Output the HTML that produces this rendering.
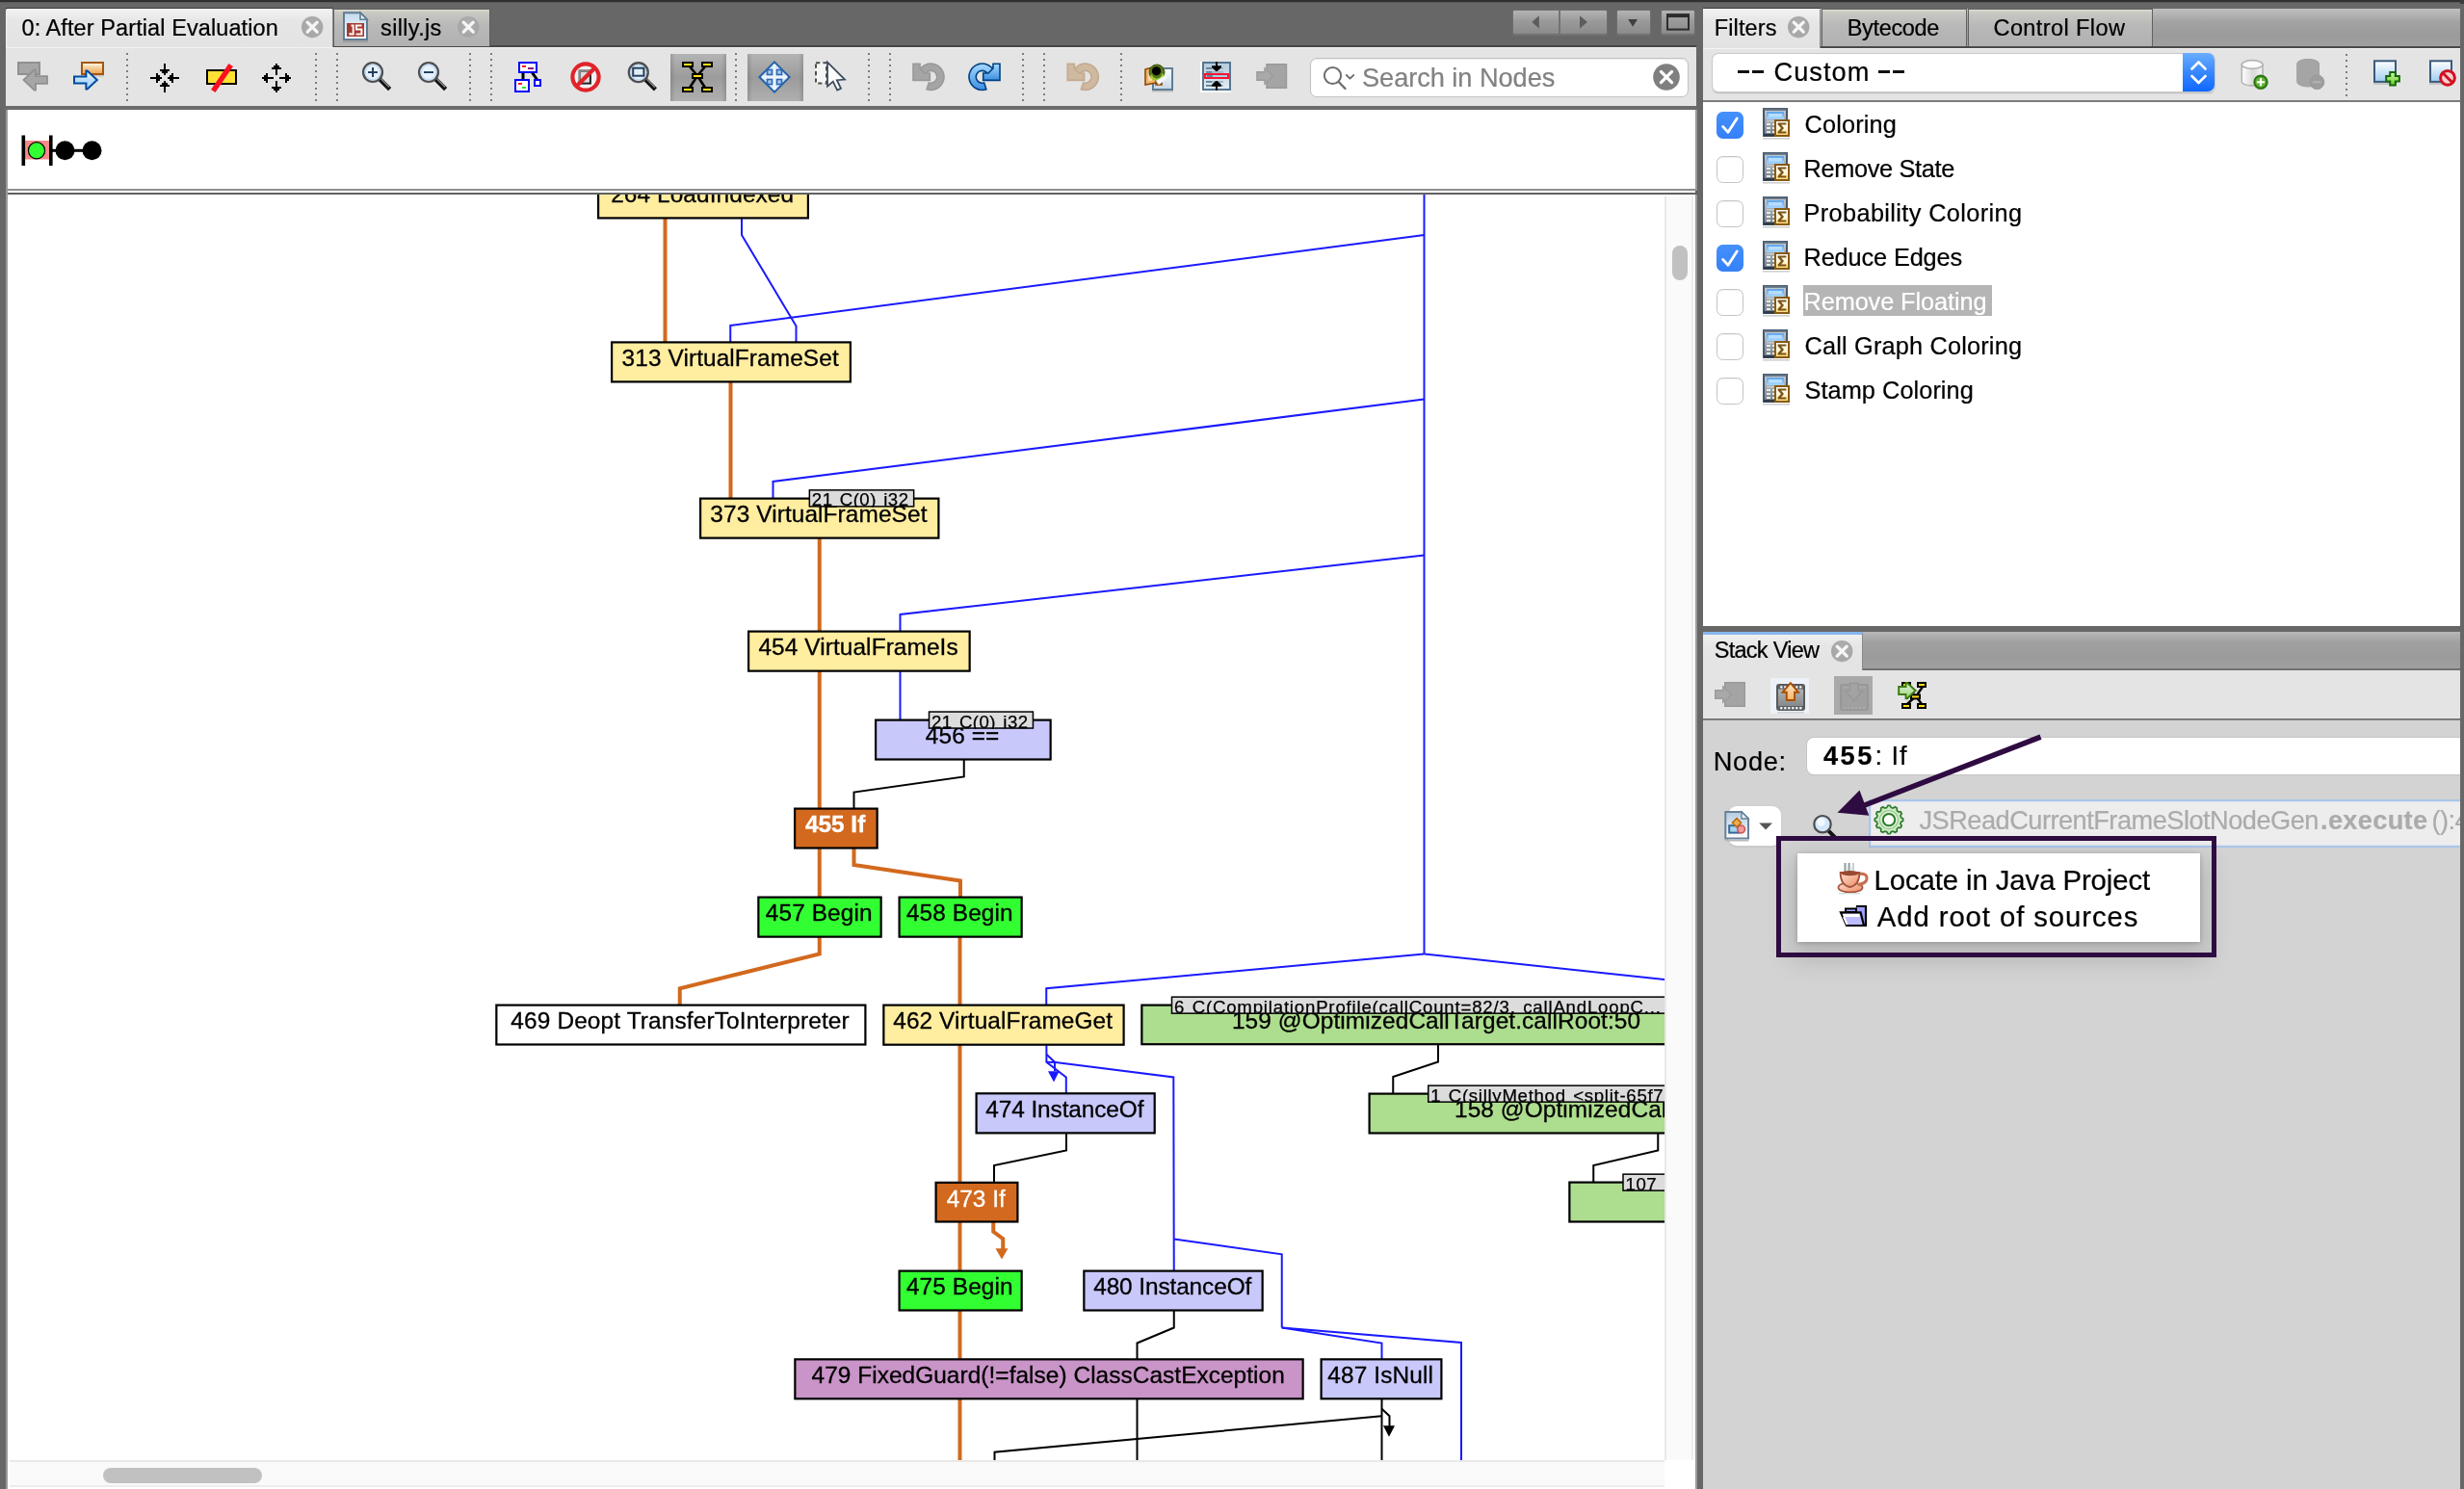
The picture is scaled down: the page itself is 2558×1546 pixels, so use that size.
<!DOCTYPE html><html><head><meta charset="utf-8"><title>IGV</title><style>
html,body{margin:0;padding:0}
body{width:2558px;height:1546px;position:relative;overflow:hidden;background:#676767;font-family:"Liberation Sans",sans-serif;}
div{box-sizing:border-box}
.abs{position:absolute}
#root{position:absolute;left:0;top:0;width:2558px;height:1546px;will-change:transform}
</style></head><body><div id="root">
<div class="" style="position:absolute;left:0px;top:0px;width:2558px;height:2px;background:#303030"></div>
<div class="" style="position:absolute;left:0px;top:2px;width:2558px;height:1px;background:#5a5a5a"></div>
<div class="" style="position:absolute;left:6px;top:47px;width:1755px;height:2px;background:#474747"></div>
<div class="" style="position:absolute;left:6px;top:8px;width:340px;height:1.2px;background:#3a3a3a"></div>
<div class="" style="position:absolute;left:1768px;top:8px;width:121.5px;height:1.2px;background:#3a3a3a"></div>
<div class="" style="position:absolute;left:6px;top:9px;width:340px;height:40px;background:linear-gradient(#f2f2f2,#e6e6e6 30%,#e3e3e3);border-top:1px solid #fafafa;border-left:1px solid #f4f4f4;border-right:1px solid #8a8a8a;border-radius:2px 2px 0 0"></div>
<div style="position:absolute;left:22.5px;top:17.61px;font-size:23.5px;line-height:23.5px;color:#000;letter-spacing:0.092px;font-weight:400;white-space:pre;-webkit-text-stroke:0.22px #000;">0: After Partial Evaluation</div>
<svg style="position:absolute;left:310.6px;top:14.8px" width="26.4" height="26.4" viewBox="-13.2 -13.2 26.4 26.4"><defs><radialGradient id="cb323" cx="50%" cy="40%" r="60%"><stop offset="0" stop-color="#b2b2b2"/><stop offset="0.8" stop-color="#a6a6a6"/><stop offset="1" stop-color="#aeaeae"/></radialGradient></defs><circle r="11.2" fill="url(#cb323)" /><path d="M-5,-5L5,5M5,-5L-5,5" stroke="#f6f6f6" stroke-width="3.3" stroke-linecap="round"/></svg>
<div class="" style="position:absolute;left:346.3px;top:8.6px;width:162.4px;height:39.2px;background:linear-gradient(#d4d4c8,#c6c6c2 12%,#b8b8b8 45%,#b1b1b1);border:1.2px solid #5e5e5e;border-bottom:none;box-shadow:inset 0 1px 0 #dcdcd0"></div>
<div style="position:absolute;left:395.1px;top:17.61px;font-size:23.5px;line-height:23.5px;color:#000;letter-spacing:0.333px;font-weight:400;white-space:pre;-webkit-text-stroke:0.22px #000;">silly.js</div>
<svg style="position:absolute;left:472.6px;top:14.8px" width="26.4" height="26.4" viewBox="-13.2 -13.2 26.4 26.4"><defs><radialGradient id="cb485" cx="50%" cy="40%" r="60%"><stop offset="0" stop-color="#b2b2b2"/><stop offset="0.8" stop-color="#a6a6a6"/><stop offset="1" stop-color="#aeaeae"/></radialGradient></defs><circle r="11.2" fill="url(#cb485)" /><path d="M-5,-5L5,5M5,-5L-5,5" stroke="#f6f6f6" stroke-width="3.3" stroke-linecap="round"/></svg>
<div class="" style="position:absolute;left:1569.5px;top:9.5px;width:99.3px;height:26.8px;background:linear-gradient(#b4b4b4,#9a9a9a 45%,#8b8b8b);border:1px solid #6e6e6e;border-radius:2px;box-shadow:0 1px 0 #757575"></div>
<div class="" style="position:absolute;left:1618.2px;top:10.5px;width:1.5px;height:25px;background:#737373"></div>
<div class="" style="position:absolute;left:1677.7px;top:9.5px;width:36.6px;height:26.8px;background:linear-gradient(#b4b4b4,#9a9a9a 45%,#8b8b8b);border:1px solid #6e6e6e;border-radius:2px;box-shadow:0 1px 0 #757575"></div>
<div class="" style="position:absolute;left:1724px;top:9.5px;width:36.2px;height:26.8px;background:linear-gradient(#b4b4b4,#9a9a9a 45%,#8b8b8b);border:1px solid #6e6e6e;border-radius:2px;box-shadow:0 1px 0 #757575"></div>
<svg class="abs" style="left:1560px;top:8px" width="210" height="32" viewBox="1560 8 210 32"><polygon points="1590.4,22.9 1597.8,16.2 1597.8,29.6" fill="#5c5c5c"/><polygon points="1647.9,22.9 1640,16.2 1640,29.6" fill="#5c5c5c"/><polygon points="1690.2,20 1700,20 1695.1,27.8" fill="#3f3f3f"/><rect x="1731" y="16" width="22" height="14.6" fill="none" stroke="#2c2c2c" stroke-width="2"/><rect x="1730" y="14.1" width="24" height="4" fill="#2c2c2c"/></svg>
<div class="" style="position:absolute;left:6px;top:49px;width:1755px;height:61px;background:#e4e4e4;border-top:1px solid #f3f3f3"></div>
<div class="" style="position:absolute;left:6px;top:110px;width:1756px;height:4px;background:#6b6b6b"></div>
<div class="" style="position:absolute;left:8px;top:114px;width:1752px;height:82px;background:#fff"></div>
<div class="" style="position:absolute;left:6px;top:114px;width:2px;height:1432px;background:#9a9a9a"></div>
<div class="" style="position:absolute;left:8px;top:196px;width:1752px;height:2px;background:#8e8e8e"></div>
<div class="" style="position:absolute;left:8px;top:198px;width:1754px;height:2px;background:#fff"></div>
<div class="" style="position:absolute;left:8px;top:200px;width:1754px;height:2px;background:#606060"></div>
<div class="" style="position:absolute;left:8px;top:202px;width:1752px;height:1344px;background:#fff"></div>
<div class="" style="position:absolute;left:1760px;top:114px;width:2px;height:1432px;background:#9a9a9a"></div>
<div class="" style="position:absolute;left:1760px;top:198px;width:2px;height:4px;background:#606060"></div>
<div class="" style="position:absolute;left:1728px;top:204px;width:30px;height:1312px;background:#fafafa;border-left:2px solid #e8e8e8;border-right:2px solid #ededed"></div>
<div class="" style="position:absolute;left:1736px;top:255px;width:16px;height:36px;background:#c1c1c1;border-radius:8px"></div>
<div class="" style="position:absolute;left:10px;top:1516px;width:1718px;height:28px;background:#fafafa;border-top:2px solid #e8e8e8;border-bottom:2px solid #ededed"></div>
<div class="" style="position:absolute;left:107px;top:1524px;width:165px;height:16px;background:#c1c1c1;border-radius:8px"></div>
<div class="" style="position:absolute;left:696.3px;top:56.3px;width:57.5px;height:49.2px;background:linear-gradient(90deg,rgba(0,0,0,0.13),rgba(0,0,0,0) 9%,rgba(0,0,0,0) 91%,rgba(0,0,0,0.13)),linear-gradient(#b4b4b4,#9c9c9c 50%,#afafaf);"></div>
<div class="" style="position:absolute;left:776.3px;top:56.3px;width:57.5px;height:49.2px;background:linear-gradient(90deg,rgba(0,0,0,0.13),rgba(0,0,0,0) 9%,rgba(0,0,0,0) 91%,rgba(0,0,0,0.13)),linear-gradient(#b4b4b4,#9c9c9c 50%,#afafaf);"></div>
<div style="position:absolute;left:131px;top:55px;width:2px;height:50px;background:repeating-linear-gradient(to bottom,#7d7d7d 0 2px,transparent 2px 6px)"></div>
<div style="position:absolute;left:327px;top:55px;width:2px;height:50px;background:repeating-linear-gradient(to bottom,#7d7d7d 0 2px,transparent 2px 6px)"></div>
<div style="position:absolute;left:349px;top:55px;width:2px;height:50px;background:repeating-linear-gradient(to bottom,#7d7d7d 0 2px,transparent 2px 6px)"></div>
<div style="position:absolute;left:487px;top:55px;width:2px;height:50px;background:repeating-linear-gradient(to bottom,#7d7d7d 0 2px,transparent 2px 6px)"></div>
<div style="position:absolute;left:509px;top:55px;width:2px;height:50px;background:repeating-linear-gradient(to bottom,#7d7d7d 0 2px,transparent 2px 6px)"></div>
<div style="position:absolute;left:763.3px;top:55px;width:2px;height:50px;background:repeating-linear-gradient(to bottom,#7d7d7d 0 2px,transparent 2px 6px)"></div>
<div style="position:absolute;left:901px;top:55px;width:2px;height:50px;background:repeating-linear-gradient(to bottom,#7d7d7d 0 2px,transparent 2px 6px)"></div>
<div style="position:absolute;left:923px;top:55px;width:2px;height:50px;background:repeating-linear-gradient(to bottom,#7d7d7d 0 2px,transparent 2px 6px)"></div>
<div style="position:absolute;left:1061px;top:55px;width:2px;height:50px;background:repeating-linear-gradient(to bottom,#7d7d7d 0 2px,transparent 2px 6px)"></div>
<div style="position:absolute;left:1083px;top:55px;width:2px;height:50px;background:repeating-linear-gradient(to bottom,#7d7d7d 0 2px,transparent 2px 6px)"></div>
<div style="position:absolute;left:1163px;top:55px;width:2px;height:50px;background:repeating-linear-gradient(to bottom,#7d7d7d 0 2px,transparent 2px 6px)"></div>
<div class="" style="position:absolute;left:1359.5px;top:59.5px;width:393px;height:41px;background:#fff;border:1.3px solid #c2c2c2;border-radius:7px;box-shadow:inset 0 1px 1px rgba(0,0,0,0.08)"></div>
<svg class="abs" style="left:1370px;top:64px" width="40" height="34" viewBox="1370 64 40 34"><circle cx="1383.5" cy="78.5" r="8.6" fill="none" stroke="#6e6e6e" stroke-width="2"/><path d="M1389.7,85L1396.5,92" stroke="#6e6e6e" stroke-width="2.4" stroke-linecap="round"/><path d="M1397.8,78L1401.5,81.6L1405.3,78" fill="none" stroke="#6e6e6e" stroke-width="1.8" stroke-linecap="round"/></svg>
<div style="position:absolute;left:1414px;top:66.98px;font-size:27.2px;line-height:27.2px;color:#828282;letter-spacing:-0.047px;font-weight:400;white-space:pre;-webkit-text-stroke:0.22px #828282;">Search in Nodes</div>
<svg class="abs" style="left:1714px;top:64px" width="32" height="32" viewBox="-16 -16 32 32"><circle r="13.8" fill="#7f7f7f"/><path d="M-5.6,-5.6L5.6,5.6M5.6,-5.6L-5.6,5.6" stroke="#fff" stroke-width="3.2" stroke-linecap="round"/></svg>
<svg class="abs" style="left:16px;top:134px" width="100" height="44" viewBox="16 134 100 44"><rect x="25" y="146" width="27" height="19.5" fill="#f98a8a"/><rect x="22.5" y="140.5" width="3.6" height="31.5" fill="#000"/><rect x="51" y="140.5" width="3.6" height="31.5" fill="#000"/><rect x="54" y="154.8" width="42" height="3" fill="#000"/><circle cx="38" cy="156.3" r="8.6" fill="#32ff32" stroke="#000" stroke-width="1.2"/><circle cx="67.5" cy="156.3" r="10" fill="#000"/><circle cx="95.5" cy="156.3" r="10" fill="#000"/></svg>
<svg id="graph" width="1720" height="1314" viewBox="8 202 1720 1314" style="position:absolute;left:8px;top:202px;background:#fff;overflow:hidden" font-family="Liberation Sans, sans-serif">
<polyline points="690.50,227.00 690.50,355.00" fill="none" stroke="#d2691e" stroke-width="4" stroke-linejoin="miter"/>
<polyline points="758.50,397.00 758.50,517.00" fill="none" stroke="#d2691e" stroke-width="4" stroke-linejoin="miter"/>
<polyline points="850.75,559.00 850.75,655.00" fill="none" stroke="#d2691e" stroke-width="4" stroke-linejoin="miter"/>
<polyline points="850.75,697.00 850.75,839.00" fill="none" stroke="#d2691e" stroke-width="4" stroke-linejoin="miter"/>
<polyline points="850.75,881.00 850.75,931.00" fill="none" stroke="#d2691e" stroke-width="4" stroke-linejoin="miter"/>
<polyline points="886.50,881.00 886.50,898.00 997.00,914.50 997.00,931.00" fill="none" stroke="#d2691e" stroke-width="4" stroke-linejoin="miter"/>
<polyline points="850.75,973.00 850.75,990.50 705.75,1026.25 705.75,1043.00" fill="none" stroke="#d2691e" stroke-width="4" stroke-linejoin="miter"/>
<polyline points="996.50,973.00 996.50,1043.00" fill="none" stroke="#d2691e" stroke-width="4" stroke-linejoin="miter"/>
<polyline points="996.50,1085.00 996.50,1227.00" fill="none" stroke="#d2691e" stroke-width="4" stroke-linejoin="miter"/>
<polyline points="996.50,1269.00 996.50,1319.00" fill="none" stroke="#d2691e" stroke-width="4" stroke-linejoin="miter"/>
<polyline points="996.50,1361.00 996.50,1411.00" fill="none" stroke="#d2691e" stroke-width="4" stroke-linejoin="miter"/>
<polyline points="996.50,1453.00 996.50,1520.00" fill="none" stroke="#d2691e" stroke-width="4" stroke-linejoin="miter"/>
<polyline points="1031.25,1269.00 1031.25,1278.75 1041.25,1286.25 1041.25,1297.00" fill="none" stroke="#d2691e" stroke-width="4" stroke-linejoin="miter"/>
<polygon points="1033.50,1296.25 1046.50,1296.25 1040.00,1307.50" fill="#d2691e"/>
<polyline points="1478.50,200.00 1478.50,990.50" fill="none" stroke="#1a1aff" stroke-width="2" stroke-linejoin="miter"/>
<polyline points="770.00,227.00 770.00,244.00 826.50,338.50 826.50,355.00" fill="none" stroke="#1a1aff" stroke-width="2" stroke-linejoin="miter"/>
<polyline points="1478.50,244.00 758.25,338.00 758.25,355.00" fill="none" stroke="#1a1aff" stroke-width="2" stroke-linejoin="miter"/>
<polyline points="1478.50,414.50 802.50,500.00 802.50,517.00" fill="none" stroke="#1a1aff" stroke-width="2" stroke-linejoin="miter"/>
<polyline points="1478.50,576.50 934.50,638.00 934.50,655.00" fill="none" stroke="#1a1aff" stroke-width="2" stroke-linejoin="miter"/>
<polyline points="934.50,697.00 934.50,747.00" fill="none" stroke="#1a1aff" stroke-width="2" stroke-linejoin="miter"/>
<polyline points="1478.50,990.50 1086.25,1026.25 1086.25,1043.00" fill="none" stroke="#1a1aff" stroke-width="2" stroke-linejoin="miter"/>
<polyline points="1478.50,990.50 1740.00,1018.30" fill="none" stroke="#1a1aff" stroke-width="2" stroke-linejoin="miter"/>
<polyline points="1086.40,1085.00 1086.40,1102.80 1106.80,1118.50 1106.80,1135.00" fill="none" stroke="#1a1aff" stroke-width="2" stroke-linejoin="miter"/>
<polyline points="1086.40,1102.80 1095.80,1103.00 1218.30,1118.50 1218.75,1319.00" fill="none" stroke="#1a1aff" stroke-width="2" stroke-linejoin="miter"/>
<polyline points="1086.40,1094.70 1095.00,1102.80 1095.00,1112.00" fill="none" stroke="#1a1aff" stroke-width="2" stroke-linejoin="miter"/>
<polygon points="1088.00,1112.30 1099.60,1112.30 1094.00,1123.40" fill="#1a1aff"/>
<polyline points="1218.75,1286.50 1330.75,1302.25 1330.75,1378.50" fill="none" stroke="#1a1aff" stroke-width="2" stroke-linejoin="miter"/>
<polyline points="1330.75,1378.50 1434.50,1394.50 1434.50,1411.00" fill="none" stroke="#1a1aff" stroke-width="2" stroke-linejoin="miter"/>
<polyline points="1330.75,1378.50 1517.00,1394.00 1517.00,1520.00" fill="none" stroke="#1a1aff" stroke-width="2" stroke-linejoin="miter"/>
<polyline points="1000.75,789.00 1000.75,806.50 886.50,822.50 886.50,839.00" fill="none" stroke="#000" stroke-width="2" stroke-linejoin="miter"/>
<polyline points="1107.00,1177.00 1107.00,1194.50 1032.00,1210.00 1032.00,1227.00" fill="none" stroke="#000" stroke-width="2" stroke-linejoin="miter"/>
<polyline points="1493.00,1084.00 1493.00,1102.50 1446.25,1118.00 1446.25,1135.00" fill="none" stroke="#000" stroke-width="2" stroke-linejoin="miter"/>
<polyline points="1721.25,1177.00 1721.25,1194.50 1654.25,1210.00 1654.25,1227.00" fill="none" stroke="#000" stroke-width="2" stroke-linejoin="miter"/>
<polyline points="1218.75,1361.00 1218.75,1378.50 1180.50,1394.50 1180.50,1411.00" fill="none" stroke="#000" stroke-width="2" stroke-linejoin="miter"/>
<polyline points="1180.50,1453.00 1180.50,1520.00" fill="none" stroke="#000" stroke-width="2" stroke-linejoin="miter"/>
<polyline points="1434.50,1453.00 1434.50,1520.00" fill="none" stroke="#000" stroke-width="2" stroke-linejoin="miter"/>
<polyline points="1434.50,1462.75 1442.50,1470.25 1442.50,1481.00" fill="none" stroke="#000" stroke-width="2" stroke-linejoin="miter"/>
<polygon points="1436.00,1480.25 1448.00,1480.25 1442.00,1491.80" fill="#000"/>
<polyline points="1434.50,1470.25 1032.50,1507.75 1032.50,1520.00" fill="none" stroke="#000" stroke-width="2" stroke-linejoin="miter"/>
<rect x="621.10" y="185.60" width="217.80" height="40.80" fill="#ffeda0" stroke="#000" stroke-width="2.2"/><text x="729.20" y="210.30" font-size="24.4" fill="#000" stroke="#000" stroke-width="0.3" font-weight="400" text-anchor="middle" letter-spacing="0.1">264 LoadIndexed</text>
<rect x="635.10" y="355.40" width="247.80" height="41.00" fill="#ffeda0" stroke="#000" stroke-width="2.2"/><text x="758.20" y="380.10" font-size="24.4" fill="#000" stroke="#000" stroke-width="0.3" font-weight="400" text-anchor="middle" letter-spacing="0.1">313 VirtualFrameSet</text>
<rect x="727.10" y="517.60" width="247.30" height="41.00" fill="#ffeda0" stroke="#000" stroke-width="2.2"/><text x="849.95" y="542.30" font-size="24.4" fill="#000" stroke="#000" stroke-width="0.3" font-weight="400" text-anchor="middle" letter-spacing="0.1">373 VirtualFrameSet</text>
<rect x="777.10" y="655.60" width="229.55" height="41.05" fill="#ffeda0" stroke="#000" stroke-width="2.2"/><text x="891.08" y="680.30" font-size="24.4" fill="#000" stroke="#000" stroke-width="0.3" font-weight="400" text-anchor="middle" letter-spacing="0.1">454 VirtualFrameIs</text>
<rect x="909.10" y="747.60" width="181.55" height="40.90" fill="#c8c8fa" stroke="#000" stroke-width="2.2"/><text x="999.08" y="772.30" font-size="24.4" fill="#000" stroke="#000" stroke-width="0.3" font-weight="400" text-anchor="middle" letter-spacing="0.1">456 ==</text>
<rect x="825.10" y="839.60" width="85.55" height="40.90" fill="#d2691e" stroke="#000" stroke-width="2.2"/><text x="867.08" y="864.30" font-size="24.4" fill="#fff" stroke="#fff" stroke-width="0.3" font-weight="700" text-anchor="middle" letter-spacing="0">455 If</text>
<rect x="787.35" y="931.60" width="127.30" height="41.05" fill="#32ff32" stroke="#000" stroke-width="2.2"/><text x="850.20" y="956.30" font-size="24.4" fill="#000" stroke="#000" stroke-width="0.3" font-weight="400" text-anchor="middle" letter-spacing="0.1">457 Begin</text>
<rect x="933.60" y="931.60" width="127.05" height="41.05" fill="#32ff32" stroke="#000" stroke-width="2.2"/><text x="996.33" y="956.30" font-size="24.4" fill="#000" stroke="#000" stroke-width="0.3" font-weight="400" text-anchor="middle" letter-spacing="0.1">458 Begin</text>
<rect x="515.35" y="1043.60" width="383.05" height="40.90" fill="#ffffff" stroke="#000" stroke-width="2.2"/><text x="706.08" y="1068.30" font-size="24.4" fill="#000" stroke="#000" stroke-width="0.3" font-weight="400" text-anchor="middle" letter-spacing="0.14">469 Deopt TransferToInterpreter</text>
<rect x="917.35" y="1043.60" width="249.25" height="41.10" fill="#ffeda0" stroke="#000" stroke-width="2.2"/><text x="1041.17" y="1068.30" font-size="24.4" fill="#000" stroke="#000" stroke-width="0.3" font-weight="400" text-anchor="middle" letter-spacing="0.1">462 VirtualFrameGet</text>
<rect x="1185.35" y="1043.60" width="613.05" height="40.60" fill="#addd8e" stroke="#000" stroke-width="2.2"/><text x="1491.08" y="1068.30" font-size="24.4" fill="#000" stroke="#000" stroke-width="0.3" font-weight="400" text-anchor="middle" letter-spacing="0.1">159 @OptimizedCallTarget.callRoot:50</text>
<rect x="1013.60" y="1135.30" width="185.10" height="41.10" fill="#c8c8fa" stroke="#000" stroke-width="2.2"/><text x="1105.35" y="1160.00" font-size="24.4" fill="#000" stroke="#000" stroke-width="0.3" font-weight="400" text-anchor="middle" letter-spacing="-0.1">474 InstanceOf</text>
<rect x="1421.60" y="1135.60" width="477.30" height="40.90" fill="#addd8e" stroke="#000" stroke-width="2.2"/><text x="1510.00" y="1160.30" font-size="24.4" fill="#000" stroke="#000" stroke-width="0.3" font-weight="400" text-anchor="start" letter-spacing="0.1">158 @OptimizedCallTarget.callInlined:60</text>
<rect x="971.60" y="1227.85" width="84.80" height="40.65" fill="#d2691e" stroke="#000" stroke-width="2.2"/><text x="1013.20" y="1252.55" font-size="24.4" fill="#fff" stroke="#fff" stroke-width="0.3" font-weight="400" text-anchor="middle" letter-spacing="0">473 If</text>
<rect x="1629.35" y="1227.60" width="269.55" height="40.90" fill="#addd8e" stroke="#000" stroke-width="2.2"/>
<rect x="933.60" y="1319.60" width="127.05" height="40.90" fill="#32ff32" stroke="#000" stroke-width="2.2"/><text x="996.33" y="1344.30" font-size="24.4" fill="#000" stroke="#000" stroke-width="0.3" font-weight="400" text-anchor="middle" letter-spacing="0.1">475 Begin</text>
<rect x="1125.35" y="1319.60" width="185.30" height="40.90" fill="#c8c8fa" stroke="#000" stroke-width="2.2"/><text x="1217.20" y="1344.30" font-size="24.4" fill="#000" stroke="#000" stroke-width="0.3" font-weight="400" text-anchor="middle" letter-spacing="-0.1">480 InstanceOf</text>
<rect x="825.35" y="1411.35" width="527.30" height="40.95" fill="#c994c7" stroke="#000" stroke-width="2.2"/><text x="1088.20" y="1436.05" font-size="24.4" fill="#000" stroke="#000" stroke-width="0.3" font-weight="400" text-anchor="middle" letter-spacing="0.06">479 FixedGuard(!=false) ClassCastException</text>
<rect x="1371.60" y="1411.35" width="124.80" height="40.95" fill="#c8c8fa" stroke="#000" stroke-width="2.2"/><text x="1433.20" y="1436.05" font-size="24.4" fill="#000" stroke="#000" stroke-width="0.3" font-weight="400" text-anchor="middle" letter-spacing="0.15">487 IsNull</text>
<clipPath id="c839_508"><rect x="839.60" y="508.10" width="109.80" height="18.5"/></clipPath><rect x="840.35" y="508.85" width="108.30" height="17" fill="#dcdcdc" stroke="#000" stroke-width="1.5"/><text clip-path="url(#c839_508)" x="842.80" y="525.40" font-size="18.6" fill="#000" stroke="#000" stroke-width="0.25" letter-spacing="0.5" word-spacing="1.6">21 C(0) i32</text>
<clipPath id="c963_738"><rect x="963.75" y="738.30" width="109.45" height="18.5"/></clipPath><rect x="964.50" y="739.05" width="107.95" height="17" fill="#dcdcdc" stroke="#000" stroke-width="1.5"/><text clip-path="url(#c963_738)" x="966.95" y="755.60" font-size="18.6" fill="#000" stroke="#000" stroke-width="0.25" letter-spacing="0.5" word-spacing="1.6">21 C(0) i32</text>
<clipPath id="c1215_1034"><rect x="1215.75" y="1034.40" width="584.25" height="18.5"/></clipPath><rect x="1216.50" y="1035.15" width="582.75" height="17" fill="#dcdcdc" stroke="#000" stroke-width="1.5"/><text clip-path="url(#c1215_1034)" x="1218.95" y="1051.70" font-size="18.6" fill="#000" stroke="#000" stroke-width="0.25" letter-spacing="0.82" word-spacing="1.6">6 C(CompilationProfile(callCount=82/3, callAndLoopC...</text>
<clipPath id="c1482_1126"><rect x="1482.00" y="1126.40" width="318.00" height="18.5"/></clipPath><rect x="1482.75" y="1127.15" width="316.50" height="17" fill="#dcdcdc" stroke="#000" stroke-width="1.5"/><text clip-path="url(#c1482_1126)" x="1485.20" y="1143.70" font-size="18.6" fill="#000" stroke="#000" stroke-width="0.25" letter-spacing="0.72" word-spacing="1.6">1 C(sillyMethod &lt;split-65f7c3&gt;)</text>
<clipPath id="c1684_1218"><rect x="1684.25" y="1218.40" width="115.75" height="18.5"/></clipPath><rect x="1685.00" y="1219.15" width="114.25" height="17" fill="#dcdcdc" stroke="#000" stroke-width="1.5"/><text clip-path="url(#c1684_1218)" x="1687.45" y="1235.70" font-size="18.6" fill="#000" stroke="#000" stroke-width="0.25" letter-spacing="0.6" word-spacing="1.6">107 C</text>
</svg>
<svg class="abs" style="left:6px;top:49px" width="1755" height="61" viewBox="6 49 1755 61"><defs><linearGradient id="gOr" x1="0" y1="0" x2="0" y2="1"><stop offset="0" stop-color="#fffaf0"/><stop offset="0.45" stop-color="#f5cf9a"/><stop offset="1" stop-color="#e9a254"/></linearGradient><linearGradient id="gBl" x1="0" y1="0" x2="0" y2="1"><stop offset="0" stop-color="#ffffff"/><stop offset="0.5" stop-color="#b9defb"/><stop offset="1" stop-color="#a5d3f7"/></linearGradient><linearGradient id="gRedo" x1="0" y1="0" x2="0" y2="1"><stop offset="0" stop-color="#a6d8ff"/><stop offset="1" stop-color="#3b8ee0"/></linearGradient><linearGradient id="gWin" x1="0" y1="0" x2="0" y2="1"><stop offset="0" stop-color="#ffffff"/><stop offset="1" stop-color="#c3d6e8"/></linearGradient><linearGradient id="gCmp" x1="0" y1="0" x2="0" y2="1"><stop offset="0" stop-color="#b4cbdc"/><stop offset="1" stop-color="#e4edf4"/></linearGradient></defs>
<rect x="19.00" y="65.00" width="22.00" height="12.00" fill="#a6a6a6" stroke="#909090" stroke-width="2"/>
<polygon points="24.50,83.00 35.60,72.30 37.00,72.30 37.00,79.20 49.00,79.20 49.00,86.80 37.00,86.80 37.00,93.70 35.60,93.70" fill="#a6a6a6" stroke="#909090" stroke-width="1.8" stroke-linejoin="miter" />
<rect x="85.00" y="65.00" width="22.00" height="12.00" fill="url(#gOr)" stroke="#a5560c" stroke-width="2"/>
<rect x="84.00" y="78.00" width="24.00" height="1.60" fill="#c9c9c9" />
<polygon points="77.00,79.40 89.40,79.40 89.40,73.40 90.60,73.40 100.80,83.00 90.60,92.60 89.40,92.60 89.40,86.60 77.00,86.60" fill="url(#gBl)" stroke="#004a9f" stroke-width="2" stroke-linejoin="miter" />
<rect x="170.00" y="66.00" width="2.00" height="6.00" fill="#000" shape-rendering="crispEdges"/><rect x="166.00" y="72.00" width="10.00" height="2.00" fill="#000" shape-rendering="crispEdges"/><rect x="168.00" y="74.00" width="6.00" height="2.00" fill="#000" shape-rendering="crispEdges"/><rect x="170.00" y="76.00" width="2.00" height="2.00" fill="#000" shape-rendering="crispEdges"/><rect x="180.00" y="80.00" width="6.00" height="2.00" fill="#000" shape-rendering="crispEdges"/><rect x="178.00" y="76.00" width="2.00" height="10.00" fill="#000" shape-rendering="crispEdges"/><rect x="176.00" y="78.00" width="2.00" height="6.00" fill="#000" shape-rendering="crispEdges"/><rect x="174.00" y="80.00" width="2.00" height="2.00" fill="#000" shape-rendering="crispEdges"/><rect x="170.00" y="90.00" width="2.00" height="6.00" fill="#000" shape-rendering="crispEdges"/><rect x="166.00" y="88.00" width="10.00" height="2.00" fill="#000" shape-rendering="crispEdges"/><rect x="168.00" y="86.00" width="6.00" height="2.00" fill="#000" shape-rendering="crispEdges"/><rect x="170.00" y="84.00" width="2.00" height="2.00" fill="#000" shape-rendering="crispEdges"/><rect x="156.00" y="80.00" width="6.00" height="2.00" fill="#000" shape-rendering="crispEdges"/><rect x="162.00" y="76.00" width="2.00" height="10.00" fill="#000" shape-rendering="crispEdges"/><rect x="164.00" y="78.00" width="2.00" height="6.00" fill="#000" shape-rendering="crispEdges"/><rect x="166.00" y="80.00" width="2.00" height="2.00" fill="#000" shape-rendering="crispEdges"/>
<rect x="215.00" y="73.00" width="30.00" height="14.00" fill="#ffe135" stroke="#000" stroke-width="2"/>
<line x1="221.30" y1="94.60" x2="239.70" y2="67.40" stroke="#fb1022" stroke-width="5.4" stroke-linecap="butt"/>
<rect x="286.00" y="66.00" width="2.00" height="2.00" fill="#000" shape-rendering="crispEdges"/><rect x="284.00" y="68.00" width="6.00" height="2.00" fill="#000" shape-rendering="crispEdges"/><rect x="282.00" y="70.00" width="10.00" height="2.00" fill="#000" shape-rendering="crispEdges"/><rect x="286.00" y="72.00" width="2.00" height="6.00" fill="#000" shape-rendering="crispEdges"/><rect x="300.00" y="80.00" width="2.00" height="2.00" fill="#000" shape-rendering="crispEdges"/><rect x="298.00" y="78.00" width="2.00" height="6.00" fill="#000" shape-rendering="crispEdges"/><rect x="296.00" y="76.00" width="2.00" height="10.00" fill="#000" shape-rendering="crispEdges"/><rect x="290.00" y="80.00" width="6.00" height="2.00" fill="#000" shape-rendering="crispEdges"/><rect x="286.00" y="94.00" width="2.00" height="2.00" fill="#000" shape-rendering="crispEdges"/><rect x="284.00" y="92.00" width="6.00" height="2.00" fill="#000" shape-rendering="crispEdges"/><rect x="282.00" y="90.00" width="10.00" height="2.00" fill="#000" shape-rendering="crispEdges"/><rect x="286.00" y="84.00" width="2.00" height="6.00" fill="#000" shape-rendering="crispEdges"/><rect x="272.00" y="80.00" width="2.00" height="2.00" fill="#000" shape-rendering="crispEdges"/><rect x="274.00" y="78.00" width="2.00" height="6.00" fill="#000" shape-rendering="crispEdges"/><rect x="276.00" y="76.00" width="2.00" height="10.00" fill="#000" shape-rendering="crispEdges"/><rect x="278.00" y="80.00" width="6.00" height="2.00" fill="#000" shape-rendering="crispEdges"/>
<g><line x1="393.14" y1="81.14" x2="404.64" y2="92.64" stroke="#111" stroke-width="4.4" stroke-linecap="butt"/><line x1="395.64" y1="81.94" x2="404.14" y2="90.44" stroke="#8a8a8a" stroke-width="1.4" stroke-linecap="butt"/><circle cx="387.00" cy="75.00" r="9.90" fill="#e7f1fb" stroke="#4d4f52" stroke-width="2.4"/><circle cx="387.00" cy="75.00" r="7.70" fill="none" stroke="#c4dcf4" stroke-width="1.6"/><rect x="382.00" y="74.10" width="10.00" height="1.90" fill="#1f3b5f" /><rect x="386.10" y="70.00" width="1.90" height="10.00" fill="#1f3b5f" /></g>
<g><line x1="451.14" y1="81.14" x2="462.64" y2="92.64" stroke="#111" stroke-width="4.4" stroke-linecap="butt"/><line x1="453.64" y1="81.94" x2="462.14" y2="90.44" stroke="#8a8a8a" stroke-width="1.4" stroke-linecap="butt"/><circle cx="445.00" cy="75.00" r="9.90" fill="#e7f1fb" stroke="#4d4f52" stroke-width="2.4"/><circle cx="445.00" cy="75.00" r="7.70" fill="none" stroke="#c4dcf4" stroke-width="1.6"/><rect x="440.00" y="74.10" width="10.00" height="1.90" fill="#1f3b5f" /></g>
<line x1="543.00" y1="75.00" x2="543.00" y2="83.00" stroke="#000" stroke-width="3" stroke-linecap="butt"/>
<line x1="552.50" y1="75.50" x2="557.50" y2="82.50" stroke="#000" stroke-width="3" stroke-linecap="butt"/>
<rect x="539.00" y="65.00" width="18.00" height="10.00" fill="#fff" stroke="#0000ff" stroke-width="2"/>
<rect x="542.00" y="68.00" width="4.00" height="1.80" fill="#ff0000" /><rect x="548.00" y="70.10" width="6.00" height="1.90" fill="#800080" />
<rect x="535.00" y="83.00" width="14.00" height="12.00" fill="#fff" stroke="#0000ff" stroke-width="2"/>
<rect x="538.00" y="86.00" width="4.00" height="1.80" fill="#ff0000" /><rect x="542.00" y="90.00" width="4.00" height="1.90" fill="#22e822" />
<rect x="555.00" y="83.00" width="6.00" height="6.00" fill="#fff" stroke="#0000ff" stroke-width="2"/>
<circle cx="608.00" cy="80.00" r="13.60" fill="#f1f1f1"/>
<rect x="601.70" y="73.60" width="11.20" height="13.00" fill="#dcdcdc" stroke="#222" stroke-width="2"/>
<line x1="601.70" y1="72.60" x2="601.70" y2="87.60" stroke="#8a8a8a" stroke-width="2" stroke-linecap="butt"/><line x1="600.70" y1="73.60" x2="613.80" y2="73.60" stroke="#8a8a8a" stroke-width="2" stroke-linecap="butt"/>
<line x1="598.00" y1="90.00" x2="618.00" y2="70.00" stroke="#e0242a" stroke-width="4.2" stroke-linecap="butt"/>
<circle cx="608.00" cy="80.00" r="13.60" fill="none" stroke="#e0242a" stroke-width="4.2"/>
<g><line x1="668.94" y1="81.34" x2="680.44" y2="92.84" stroke="#111" stroke-width="4.4" stroke-linecap="butt"/><line x1="671.44" y1="82.14" x2="679.94" y2="90.64" stroke="#8a8a8a" stroke-width="1.4" stroke-linecap="butt"/><circle cx="662.80" cy="75.20" r="9.90" fill="#e7f1fb" stroke="#4d4f52" stroke-width="2.4"/><circle cx="662.80" cy="75.20" r="7.70" fill="none" stroke="#c4dcf4" stroke-width="1.6"/><rect x="657.20" y="70.70" width="11.20" height="8.00" fill="#e3edf6" stroke="#27405f" stroke-width="2"/></g>
<line x1="716.00" y1="69.00" x2="722.50" y2="77.00" stroke="#000" stroke-width="2.6" stroke-linecap="butt"/><line x1="732.00" y1="69.00" x2="725.50" y2="77.00" stroke="#000" stroke-width="2.6" stroke-linecap="butt"/><line x1="722.50" y1="81.00" x2="716.00" y2="91.00" stroke="#000" stroke-width="2.6" stroke-linecap="butt"/><line x1="725.50" y1="81.00" x2="732.00" y2="91.00" stroke="#000" stroke-width="2.6" stroke-linecap="butt"/><rect x="708.00" y="64.00" width="12.00" height="6.00" fill="#000" shape-rendering="crispEdges"/><rect x="710.00" y="66.00" width="8.00" height="2.00" fill="#ffe01a" shape-rendering="crispEdges"/><rect x="728.00" y="64.00" width="12.00" height="6.00" fill="#000" shape-rendering="crispEdges"/><rect x="730.00" y="66.00" width="8.00" height="2.00" fill="#ffe01a" shape-rendering="crispEdges"/><rect x="718.00" y="76.00" width="12.00" height="6.00" fill="#000" shape-rendering="crispEdges"/><rect x="720.00" y="78.00" width="8.00" height="2.00" fill="#ffe01a" shape-rendering="crispEdges"/><rect x="708.00" y="90.00" width="12.00" height="6.00" fill="#000" shape-rendering="crispEdges"/><rect x="710.00" y="92.00" width="8.00" height="2.00" fill="#ffe01a" shape-rendering="crispEdges"/><rect x="728.00" y="90.00" width="12.00" height="6.00" fill="#000" shape-rendering="crispEdges"/><rect x="730.00" y="92.00" width="8.00" height="2.00" fill="#ffe01a" shape-rendering="crispEdges"/>
<polygon points="804.00,64.40 819.60,80.00 804.00,95.60 788.40,80.00" fill="#d6e6f8" stroke="#2562ab" stroke-width="2" stroke-linejoin="miter" />
<line x1="804.00" y1="67.00" x2="804.00" y2="93.00" stroke="#eef5fd" stroke-width="3" stroke-linecap="butt"/><line x1="791.00" y1="80.00" x2="817.00" y2="80.00" stroke="#eef5fd" stroke-width="3" stroke-linecap="butt"/>
<rect x="796.50" y="72.50" width="5.00" height="5.00" fill="#a9c9ec" stroke="#2b69b3" stroke-width="1.6"/>
<rect x="796.50" y="82.50" width="5.00" height="5.00" fill="#a9c9ec" stroke="#2b69b3" stroke-width="1.6"/>
<rect x="806.50" y="72.50" width="5.00" height="5.00" fill="#a9c9ec" stroke="#2b69b3" stroke-width="1.6"/>
<rect x="806.50" y="82.50" width="5.00" height="5.00" fill="#a9c9ec" stroke="#2b69b3" stroke-width="1.6"/>
<rect x="847.00" y="65.20" width="11.00" height="21.40" fill="#f5f5f5" stroke="#4e4e4e" stroke-width="2" stroke-dasharray="4.2 3.2"/>
<polygon points="859.00,64.60 859.00,89.60 864.80,84.60 869.20,93.60 873.00,91.80 868.80,83.20 877.00,82.60" fill="#fdfdfd" stroke="#3d4b5c" stroke-width="1.8" stroke-linejoin="miter" />
<g><path d="M953.60,74.67 A13.7,13.7 0 1 1 962.07,92.83 L964.32,85.89 A6.4,6.4 0 1 0 960.37,77.40 Z" fill="#a5a5a5" stroke="#999999" stroke-width="1.6"/><path d="M948.00,66.3 L955.00,66.3 L955.00,71 L960.00,76 L965.30,76 L965.30,83.4 L948.00,83.4 Z" fill="#a5a5a5" stroke="#999999" stroke-width="1.6"/></g>
<g transform="translate(2044.00,0) scale(-1,1)"><path d="M1011.60,74.67 A13.7,13.7 0 1 1 1020.07,92.83 L1022.32,85.89 A6.4,6.4 0 1 0 1018.37,77.40 Z" fill="url(#gRedo)" stroke="#003f82" stroke-width="1.6"/><path d="M1006.00,66.3 L1013.00,66.3 L1013.00,71 L1018.00,76 L1023.30,76 L1023.30,83.4 L1006.00,83.4 Z" fill="url(#gRedo)" stroke="#003f82" stroke-width="1.6"/></g>
<g><path d="M1113.90,74.67 A13.7,13.7 0 1 1 1122.37,92.83 L1124.62,85.89 A6.4,6.4 0 1 0 1120.67,77.40 Z" fill="#cfb99f" stroke="#c2aa90" stroke-width="1.6"/><path d="M1108.30,66.3 L1115.30,66.3 L1115.30,71 L1120.30,76 L1125.60,76 L1125.60,83.4 L1108.30,83.4 Z" fill="#cfb99f" stroke="#c2aa90" stroke-width="1.6"/></g>
<rect x="1197.00" y="71.00" width="20.00" height="22.00" fill="url(#gWin)" stroke="#5f7d95" stroke-width="2"/>
<rect x="1196.00" y="94.00" width="22.00" height="1.60" fill="#c2c2c2" />
<path d="M1189,72 L1196,70 L1200,72 L1200,88 L1206,88 L1206,86 L1200,86 L1189,88 Z" fill="#f2b467" stroke="#8a4a06" stroke-width="1.6"/>
<rect x="1192.00" y="74.00" width="4.00" height="10.00" fill="#fbd9a6" />
<circle cx="1201.00" cy="75.00" r="8.00" fill="#557318" stroke="#3f5a10" stroke-width="1"/>
<path d="M1194,79 A8,8 0 0 0 1209,78 L1206,76 A5,5 0 0 1 1196,77 Z" fill="#9acd32"/>
<path d="M1200,84 L1210,78 L1212,81 L1203,88 Z" fill="#f4f7fa"/>
<circle cx="1200.50" cy="73.80" r="4.60" fill="#000"/>
<rect x="1246.00" y="64.00" width="32.00" height="32.00" fill="#ffffff" />
<rect x="1249.00" y="65.00" width="28.00" height="28.00" fill="url(#gCmp)" stroke="#567690" stroke-width="2"/>
<rect x="1252.00" y="70.00" width="6.00" height="1.80" fill="#5c7f95" /><rect x="1258.00" y="70.00" width="12.00" height="1.80" fill="#9db5c6" />
<rect x="1252.00" y="74.00" width="6.00" height="1.80" fill="#5c7f95" /><rect x="1258.00" y="74.00" width="12.00" height="1.80" fill="#9db5c6" />
<rect x="1252.00" y="84.00" width="6.00" height="1.80" fill="#5c7f95" /><rect x="1258.00" y="84.00" width="12.00" height="1.80" fill="#9db5c6" />
<rect x="1252.00" y="88.00" width="6.00" height="1.80" fill="#5c7f95" /><rect x="1258.00" y="88.00" width="12.00" height="1.80" fill="#9db5c6" />
<rect x="1251.00" y="77.00" width="24.00" height="4.00" fill="#9fd4e4" stroke="#ff1232" stroke-width="2"/>
<rect x="1253.00" y="78.10" width="6.00" height="1.80" fill="#4f8296" />
<rect x="1262.00" y="64.00" width="2.00" height="9.70" fill="#000" /><polygon points="1258.00,68.30 1268.00,68.30 1268.00,70.00 1264.00,73.70 1262.00,73.70 1258.00,70.00" fill="#000" />
<rect x="1262.00" y="84.30" width="2.00" height="9.70" fill="#000" /><polygon points="1258.00,89.70 1268.00,89.70 1268.00,88.00 1264.00,84.30 1262.00,84.30 1258.00,88.00" fill="#000" />
<rect x="1314.90" y="66.70" width="20.60" height="24.60" fill="#a4a4a4" stroke="#999999" stroke-width="1.4"/><polygon points="1304.90,74.70 1313.00,74.70 1313.00,70.80 1321.50,79.00 1313.00,87.20 1313.00,83.30 1304.90,83.30" fill="#a9a9a9" stroke="#9c9c9c" stroke-width="1.4" stroke-linejoin="miter" />
</svg>
<div class="" style="position:absolute;left:1768px;top:9px;width:786px;height:38.5px;background:linear-gradient(#bfbfbf,#a3a3a3 35%,#9b9b9b 70%,#9f9f9f)"></div>
<div class="" style="position:absolute;left:1768px;top:47.5px;width:786px;height:2px;background:#4a4a4a"></div>
<div class="" style="position:absolute;left:1768px;top:9px;width:121.5px;height:41px;background:linear-gradient(#f2f2f2,#e6e6e6 30%,#e3e3e3);border-top:1px solid #fafafa;border-right:1px solid #8a8a8a"></div>
<div style="position:absolute;left:1779.75px;top:17.61px;font-size:23.5px;line-height:23.5px;color:#000;letter-spacing:0.13px;font-weight:400;white-space:pre;-webkit-text-stroke:0.22px #000;">Filters</div>
<svg style="position:absolute;left:1854.3px;top:14.8px" width="26.4" height="26.4" viewBox="-13.2 -13.2 26.4 26.4"><defs><radialGradient id="cb1867" cx="50%" cy="40%" r="60%"><stop offset="0" stop-color="#b2b2b2"/><stop offset="0.8" stop-color="#a6a6a6"/><stop offset="1" stop-color="#aeaeae"/></radialGradient></defs><circle r="11.2" fill="url(#cb1867)" /><path d="M-5,-5L5,5M5,-5L-5,5" stroke="#f6f6f6" stroke-width="3.3" stroke-linecap="round"/></svg>
<div class="" style="position:absolute;left:1890.5px;top:8.6px;width:151.5px;height:39.2px;background:linear-gradient(#d4d4c8,#c6c6c2 12%,#b8b8b8 45%,#b1b1b1);border:1.2px solid #626262;border-bottom:none;box-shadow:inset 0 1px 0 #dcdcd0"></div>
<div style="position:absolute;left:1917.75px;top:17.61px;font-size:23.5px;line-height:23.5px;color:#000;letter-spacing:-0.345px;font-weight:400;white-space:pre;-webkit-text-stroke:0.22px #000;">Bytecode</div>
<div class="" style="position:absolute;left:2043px;top:8.6px;width:191.5px;height:39.2px;background:linear-gradient(#d4d4c8,#c6c6c2 12%,#b8b8b8 45%,#b1b1b1);border:1.2px solid #626262;border-bottom:none;box-shadow:inset 0 1px 0 #dcdcd0"></div>
<div style="position:absolute;left:2069.5px;top:17.61px;font-size:23.5px;line-height:23.5px;color:#000;letter-spacing:0.415px;font-weight:400;white-space:pre;-webkit-text-stroke:0.22px #000;">Control Flow</div>
<div class="" style="position:absolute;left:1768px;top:49.5px;width:786px;height:54.3px;background:#e4e4e4;border-top:1px solid #f3f3f3"></div>
<div class="" style="position:absolute;left:1768px;top:103.7px;width:786px;height:2.1px;background:#7c7c7c"></div>
<div class="" style="position:absolute;left:1777.5px;top:55.5px;width:521.3px;height:39.3px;background:#fff;border-radius:6px;box-shadow:0 0 0 1px #c9c9c9, 0 1.5px 1.5px rgba(0,0,0,0.18)"></div>
<div class="" style="position:absolute;left:2266px;top:55.2px;width:33px;height:39.8px;background:linear-gradient(#6aaeff,#3d8bff 45%,#0f67ff);border-radius:0 7px 7px 0"></div>
<svg class="abs" style="left:2266px;top:55px" width="33" height="40" viewBox="2266 55 33 40"><path d="M2275.5,71.5L2282.5,64.5L2289.5,71.5M2275.5,79L2282.5,86L2289.5,79" fill="none" stroke="#fff" stroke-width="2.6" stroke-linecap="round" stroke-linejoin="round"/></svg>
<div class="" style="position:absolute;left:1804px;top:73.4px;width:12px;height:2.3px;background:#111"></div>
<div class="" style="position:absolute;left:1819.3px;top:73.4px;width:12px;height:2.3px;background:#111"></div>
<div style="position:absolute;left:1841.5px;top:60.73px;font-size:27.2px;line-height:27.2px;color:#000;letter-spacing:1.046px;font-weight:400;white-space:pre;-webkit-text-stroke:0.22px #000;">Custom</div>
<div class="" style="position:absolute;left:1950px;top:73.4px;width:12px;height:2.3px;background:#111"></div>
<div class="" style="position:absolute;left:1965.3px;top:73.4px;width:12px;height:2.3px;background:#111"></div>
<div style="position:absolute;left:2435px;top:55.5px;width:2px;height:44px;background:repeating-linear-gradient(to bottom,#7d7d7d 0 2px,transparent 2px 6px)"></div>
<div class="" style="position:absolute;left:1768px;top:105.8px;width:786px;height:544.2px;background:#fff"></div>
<div class="" style="position:absolute;left:1782px;top:116.0px;width:28px;height:28px;background:linear-gradient(#4590fb,#3580f8);border-radius:6.5px"></div>
<svg class="abs" style="left:1782px;top:116.0px" width="28" height="28" viewBox="0 0 28 28"><path d="M6.6,15.4L12,21.2L21.2,7" fill="none" stroke="#fff" stroke-width="2.8" stroke-linecap="round" stroke-linejoin="round"/></svg>
<div style="position:absolute;left:1873.5px;top:116.98px;font-size:25.3px;line-height:25.3px;color:#000;letter-spacing:0.151px;font-weight:400;white-space:pre;-webkit-text-stroke:0.22px #000;">Coloring</div>
<svg class="abs" style="left:1830px;top:112.2px" width="30" height="34" viewBox="0 0 30 34"><defs><linearGradient id="cb" x1="0" y1="0" x2="0" y2="1"><stop offset="0" stop-color="#c9ced3"/><stop offset="1" stop-color="#717d88"/></linearGradient><linearGradient id="cs" x1="0" y1="0" x2="0" y2="1"><stop offset="0" stop-color="#5ea2ea"/><stop offset="1" stop-color="#a7d6ff"/></linearGradient><linearGradient id="sg" x1="0" y1="0" x2="0" y2="1"><stop offset="0" stop-color="#ffffff"/><stop offset="0.55" stop-color="#fff6d8"/><stop offset="1" stop-color="#ffd96a"/></linearGradient></defs><rect x="1.00" y="1.00" width="24.00" height="28.00" fill="url(#cb)" stroke="#47576a" stroke-width="2"/><rect x="1.00" y="0.60" width="24.00" height="2.20" fill="#5d6f80" /><rect x="1.00" y="27.00" width="24.00" height="2.60" fill="#2f3c49" /><rect x="0.00" y="31.00" width="28.00" height="1.60" fill="#cfcfcf" /><rect x="4.00" y="4.00" width="18.00" height="8.00" fill="url(#cs)" /><rect x="6.00" y="6.00" width="14.00" height="3.60" fill="#b5defe" /><rect x="4.00" y="13.00" width="18.00" height="1.60" fill="#c5cacf" /><rect x="4.00" y="16.00" width="4.00" height="2.00" fill="#e9e9e9" /><rect x="10.00" y="16.00" width="4.00" height="2.00" fill="#e9e9e9" /><rect x="4.00" y="20.00" width="4.00" height="2.00" fill="#e9e9e9" /><rect x="10.00" y="20.00" width="4.00" height="2.00" fill="#e9e9e9" /><rect x="4.00" y="24.00" width="4.00" height="2.00" fill="#e9e9e9" /><rect x="10.00" y="24.00" width="4.00" height="2.00" fill="#e9e9e9" /><rect x="13.00" y="13.00" width="14.00" height="16.00" fill="url(#sg)" stroke="#875a12" stroke-width="2"/><path d="M15.6,15.6 H24.4 V17.6 H19 L22,21 L19,24.4 H24.4 V26.4 H15.6 V24.8 L19,21 L15.6,17.2 Z" fill="#6f4708" opacity="0.92"/></svg>
<div class="" style="position:absolute;left:1782px;top:162.4px;width:28px;height:27.4px;background:#fff;border:1.3px solid #c4c4c4;border-radius:6.5px;box-shadow:inset 0 1px 1px rgba(0,0,0,0.06)"></div>
<div style="position:absolute;left:1872.5px;top:162.98px;font-size:25.3px;line-height:25.3px;color:#000;letter-spacing:-0.32px;font-weight:400;white-space:pre;-webkit-text-stroke:0.22px #000;">Remove State</div>
<svg class="abs" style="left:1830px;top:158.2px" width="30" height="34" viewBox="0 0 30 34"><defs><linearGradient id="cb" x1="0" y1="0" x2="0" y2="1"><stop offset="0" stop-color="#c9ced3"/><stop offset="1" stop-color="#717d88"/></linearGradient><linearGradient id="cs" x1="0" y1="0" x2="0" y2="1"><stop offset="0" stop-color="#5ea2ea"/><stop offset="1" stop-color="#a7d6ff"/></linearGradient><linearGradient id="sg" x1="0" y1="0" x2="0" y2="1"><stop offset="0" stop-color="#ffffff"/><stop offset="0.55" stop-color="#fff6d8"/><stop offset="1" stop-color="#ffd96a"/></linearGradient></defs><rect x="1.00" y="1.00" width="24.00" height="28.00" fill="url(#cb)" stroke="#47576a" stroke-width="2"/><rect x="1.00" y="0.60" width="24.00" height="2.20" fill="#5d6f80" /><rect x="1.00" y="27.00" width="24.00" height="2.60" fill="#2f3c49" /><rect x="0.00" y="31.00" width="28.00" height="1.60" fill="#cfcfcf" /><rect x="4.00" y="4.00" width="18.00" height="8.00" fill="url(#cs)" /><rect x="6.00" y="6.00" width="14.00" height="3.60" fill="#b5defe" /><rect x="4.00" y="13.00" width="18.00" height="1.60" fill="#c5cacf" /><rect x="4.00" y="16.00" width="4.00" height="2.00" fill="#e9e9e9" /><rect x="10.00" y="16.00" width="4.00" height="2.00" fill="#e9e9e9" /><rect x="4.00" y="20.00" width="4.00" height="2.00" fill="#e9e9e9" /><rect x="10.00" y="20.00" width="4.00" height="2.00" fill="#e9e9e9" /><rect x="4.00" y="24.00" width="4.00" height="2.00" fill="#e9e9e9" /><rect x="10.00" y="24.00" width="4.00" height="2.00" fill="#e9e9e9" /><rect x="13.00" y="13.00" width="14.00" height="16.00" fill="url(#sg)" stroke="#875a12" stroke-width="2"/><path d="M15.6,15.6 H24.4 V17.6 H19 L22,21 L19,24.4 H24.4 V26.4 H15.6 V24.8 L19,21 L15.6,17.2 Z" fill="#6f4708" opacity="0.92"/></svg>
<div class="" style="position:absolute;left:1782px;top:208.4px;width:28px;height:27.4px;background:#fff;border:1.3px solid #c4c4c4;border-radius:6.5px;box-shadow:inset 0 1px 1px rgba(0,0,0,0.06)"></div>
<div style="position:absolute;left:1872.5px;top:208.98px;font-size:25.3px;line-height:25.3px;color:#000;letter-spacing:0.375px;font-weight:400;white-space:pre;-webkit-text-stroke:0.22px #000;">Probability Coloring</div>
<svg class="abs" style="left:1830px;top:204.2px" width="30" height="34" viewBox="0 0 30 34"><defs><linearGradient id="cb" x1="0" y1="0" x2="0" y2="1"><stop offset="0" stop-color="#c9ced3"/><stop offset="1" stop-color="#717d88"/></linearGradient><linearGradient id="cs" x1="0" y1="0" x2="0" y2="1"><stop offset="0" stop-color="#5ea2ea"/><stop offset="1" stop-color="#a7d6ff"/></linearGradient><linearGradient id="sg" x1="0" y1="0" x2="0" y2="1"><stop offset="0" stop-color="#ffffff"/><stop offset="0.55" stop-color="#fff6d8"/><stop offset="1" stop-color="#ffd96a"/></linearGradient></defs><rect x="1.00" y="1.00" width="24.00" height="28.00" fill="url(#cb)" stroke="#47576a" stroke-width="2"/><rect x="1.00" y="0.60" width="24.00" height="2.20" fill="#5d6f80" /><rect x="1.00" y="27.00" width="24.00" height="2.60" fill="#2f3c49" /><rect x="0.00" y="31.00" width="28.00" height="1.60" fill="#cfcfcf" /><rect x="4.00" y="4.00" width="18.00" height="8.00" fill="url(#cs)" /><rect x="6.00" y="6.00" width="14.00" height="3.60" fill="#b5defe" /><rect x="4.00" y="13.00" width="18.00" height="1.60" fill="#c5cacf" /><rect x="4.00" y="16.00" width="4.00" height="2.00" fill="#e9e9e9" /><rect x="10.00" y="16.00" width="4.00" height="2.00" fill="#e9e9e9" /><rect x="4.00" y="20.00" width="4.00" height="2.00" fill="#e9e9e9" /><rect x="10.00" y="20.00" width="4.00" height="2.00" fill="#e9e9e9" /><rect x="4.00" y="24.00" width="4.00" height="2.00" fill="#e9e9e9" /><rect x="10.00" y="24.00" width="4.00" height="2.00" fill="#e9e9e9" /><rect x="13.00" y="13.00" width="14.00" height="16.00" fill="url(#sg)" stroke="#875a12" stroke-width="2"/><path d="M15.6,15.6 H24.4 V17.6 H19 L22,21 L19,24.4 H24.4 V26.4 H15.6 V24.8 L19,21 L15.6,17.2 Z" fill="#6f4708" opacity="0.92"/></svg>
<div class="" style="position:absolute;left:1782px;top:254.0px;width:28px;height:28px;background:linear-gradient(#4590fb,#3580f8);border-radius:6.5px"></div>
<svg class="abs" style="left:1782px;top:254.0px" width="28" height="28" viewBox="0 0 28 28"><path d="M6.6,15.4L12,21.2L21.2,7" fill="none" stroke="#fff" stroke-width="2.8" stroke-linecap="round" stroke-linejoin="round"/></svg>
<div style="position:absolute;left:1872.5px;top:254.98px;font-size:25.3px;line-height:25.3px;color:#000;letter-spacing:-0.118px;font-weight:400;white-space:pre;-webkit-text-stroke:0.22px #000;">Reduce Edges</div>
<svg class="abs" style="left:1830px;top:250.2px" width="30" height="34" viewBox="0 0 30 34"><defs><linearGradient id="cb" x1="0" y1="0" x2="0" y2="1"><stop offset="0" stop-color="#c9ced3"/><stop offset="1" stop-color="#717d88"/></linearGradient><linearGradient id="cs" x1="0" y1="0" x2="0" y2="1"><stop offset="0" stop-color="#5ea2ea"/><stop offset="1" stop-color="#a7d6ff"/></linearGradient><linearGradient id="sg" x1="0" y1="0" x2="0" y2="1"><stop offset="0" stop-color="#ffffff"/><stop offset="0.55" stop-color="#fff6d8"/><stop offset="1" stop-color="#ffd96a"/></linearGradient></defs><rect x="1.00" y="1.00" width="24.00" height="28.00" fill="url(#cb)" stroke="#47576a" stroke-width="2"/><rect x="1.00" y="0.60" width="24.00" height="2.20" fill="#5d6f80" /><rect x="1.00" y="27.00" width="24.00" height="2.60" fill="#2f3c49" /><rect x="0.00" y="31.00" width="28.00" height="1.60" fill="#cfcfcf" /><rect x="4.00" y="4.00" width="18.00" height="8.00" fill="url(#cs)" /><rect x="6.00" y="6.00" width="14.00" height="3.60" fill="#b5defe" /><rect x="4.00" y="13.00" width="18.00" height="1.60" fill="#c5cacf" /><rect x="4.00" y="16.00" width="4.00" height="2.00" fill="#e9e9e9" /><rect x="10.00" y="16.00" width="4.00" height="2.00" fill="#e9e9e9" /><rect x="4.00" y="20.00" width="4.00" height="2.00" fill="#e9e9e9" /><rect x="10.00" y="20.00" width="4.00" height="2.00" fill="#e9e9e9" /><rect x="4.00" y="24.00" width="4.00" height="2.00" fill="#e9e9e9" /><rect x="10.00" y="24.00" width="4.00" height="2.00" fill="#e9e9e9" /><rect x="13.00" y="13.00" width="14.00" height="16.00" fill="url(#sg)" stroke="#875a12" stroke-width="2"/><path d="M15.6,15.6 H24.4 V17.6 H19 L22,21 L19,24.4 H24.4 V26.4 H15.6 V24.8 L19,21 L15.6,17.2 Z" fill="#6f4708" opacity="0.92"/></svg>
<div class="" style="position:absolute;left:1782px;top:300.4px;width:28px;height:27.4px;background:#fff;border:1.3px solid #c4c4c4;border-radius:6.5px;box-shadow:inset 0 1px 1px rgba(0,0,0,0.06)"></div>
<div class="" style="position:absolute;left:1872px;top:296.2px;width:196px;height:31.4px;background:#b5b5b5"></div>
<div style="position:absolute;left:1872.5px;top:300.98px;font-size:25.3px;line-height:25.3px;color:#fff;letter-spacing:-0.089px;font-weight:400;white-space:pre;-webkit-text-stroke:0.22px #fff;">Remove Floating</div>
<svg class="abs" style="left:1830px;top:296.2px" width="30" height="34" viewBox="0 0 30 34"><defs><linearGradient id="cb" x1="0" y1="0" x2="0" y2="1"><stop offset="0" stop-color="#c9ced3"/><stop offset="1" stop-color="#717d88"/></linearGradient><linearGradient id="cs" x1="0" y1="0" x2="0" y2="1"><stop offset="0" stop-color="#5ea2ea"/><stop offset="1" stop-color="#a7d6ff"/></linearGradient><linearGradient id="sg" x1="0" y1="0" x2="0" y2="1"><stop offset="0" stop-color="#ffffff"/><stop offset="0.55" stop-color="#fff6d8"/><stop offset="1" stop-color="#ffd96a"/></linearGradient></defs><rect x="1.00" y="1.00" width="24.00" height="28.00" fill="url(#cb)" stroke="#47576a" stroke-width="2"/><rect x="1.00" y="0.60" width="24.00" height="2.20" fill="#5d6f80" /><rect x="1.00" y="27.00" width="24.00" height="2.60" fill="#2f3c49" /><rect x="0.00" y="31.00" width="28.00" height="1.60" fill="#cfcfcf" /><rect x="4.00" y="4.00" width="18.00" height="8.00" fill="url(#cs)" /><rect x="6.00" y="6.00" width="14.00" height="3.60" fill="#b5defe" /><rect x="4.00" y="13.00" width="18.00" height="1.60" fill="#c5cacf" /><rect x="4.00" y="16.00" width="4.00" height="2.00" fill="#e9e9e9" /><rect x="10.00" y="16.00" width="4.00" height="2.00" fill="#e9e9e9" /><rect x="4.00" y="20.00" width="4.00" height="2.00" fill="#e9e9e9" /><rect x="10.00" y="20.00" width="4.00" height="2.00" fill="#e9e9e9" /><rect x="4.00" y="24.00" width="4.00" height="2.00" fill="#e9e9e9" /><rect x="10.00" y="24.00" width="4.00" height="2.00" fill="#e9e9e9" /><rect x="13.00" y="13.00" width="14.00" height="16.00" fill="url(#sg)" stroke="#875a12" stroke-width="2"/><path d="M15.6,15.6 H24.4 V17.6 H19 L22,21 L19,24.4 H24.4 V26.4 H15.6 V24.8 L19,21 L15.6,17.2 Z" fill="#6f4708" opacity="0.92"/></svg>
<div class="" style="position:absolute;left:1782px;top:346.4px;width:28px;height:27.4px;background:#fff;border:1.3px solid #c4c4c4;border-radius:6.5px;box-shadow:inset 0 1px 1px rgba(0,0,0,0.06)"></div>
<div style="position:absolute;left:1873.5px;top:346.98px;font-size:25.3px;line-height:25.3px;color:#000;letter-spacing:0.184px;font-weight:400;white-space:pre;-webkit-text-stroke:0.22px #000;">Call Graph Coloring</div>
<svg class="abs" style="left:1830px;top:342.2px" width="30" height="34" viewBox="0 0 30 34"><defs><linearGradient id="cb" x1="0" y1="0" x2="0" y2="1"><stop offset="0" stop-color="#c9ced3"/><stop offset="1" stop-color="#717d88"/></linearGradient><linearGradient id="cs" x1="0" y1="0" x2="0" y2="1"><stop offset="0" stop-color="#5ea2ea"/><stop offset="1" stop-color="#a7d6ff"/></linearGradient><linearGradient id="sg" x1="0" y1="0" x2="0" y2="1"><stop offset="0" stop-color="#ffffff"/><stop offset="0.55" stop-color="#fff6d8"/><stop offset="1" stop-color="#ffd96a"/></linearGradient></defs><rect x="1.00" y="1.00" width="24.00" height="28.00" fill="url(#cb)" stroke="#47576a" stroke-width="2"/><rect x="1.00" y="0.60" width="24.00" height="2.20" fill="#5d6f80" /><rect x="1.00" y="27.00" width="24.00" height="2.60" fill="#2f3c49" /><rect x="0.00" y="31.00" width="28.00" height="1.60" fill="#cfcfcf" /><rect x="4.00" y="4.00" width="18.00" height="8.00" fill="url(#cs)" /><rect x="6.00" y="6.00" width="14.00" height="3.60" fill="#b5defe" /><rect x="4.00" y="13.00" width="18.00" height="1.60" fill="#c5cacf" /><rect x="4.00" y="16.00" width="4.00" height="2.00" fill="#e9e9e9" /><rect x="10.00" y="16.00" width="4.00" height="2.00" fill="#e9e9e9" /><rect x="4.00" y="20.00" width="4.00" height="2.00" fill="#e9e9e9" /><rect x="10.00" y="20.00" width="4.00" height="2.00" fill="#e9e9e9" /><rect x="4.00" y="24.00" width="4.00" height="2.00" fill="#e9e9e9" /><rect x="10.00" y="24.00" width="4.00" height="2.00" fill="#e9e9e9" /><rect x="13.00" y="13.00" width="14.00" height="16.00" fill="url(#sg)" stroke="#875a12" stroke-width="2"/><path d="M15.6,15.6 H24.4 V17.6 H19 L22,21 L19,24.4 H24.4 V26.4 H15.6 V24.8 L19,21 L15.6,17.2 Z" fill="#6f4708" opacity="0.92"/></svg>
<div class="" style="position:absolute;left:1782px;top:392.4px;width:28px;height:27.4px;background:#fff;border:1.3px solid #c4c4c4;border-radius:6.5px;box-shadow:inset 0 1px 1px rgba(0,0,0,0.06)"></div>
<div style="position:absolute;left:1873.5px;top:392.98px;font-size:25.3px;line-height:25.3px;color:#000;letter-spacing:0.071px;font-weight:400;white-space:pre;-webkit-text-stroke:0.22px #000;">Stamp Coloring</div>
<svg class="abs" style="left:1830px;top:388.2px" width="30" height="34" viewBox="0 0 30 34"><defs><linearGradient id="cb" x1="0" y1="0" x2="0" y2="1"><stop offset="0" stop-color="#c9ced3"/><stop offset="1" stop-color="#717d88"/></linearGradient><linearGradient id="cs" x1="0" y1="0" x2="0" y2="1"><stop offset="0" stop-color="#5ea2ea"/><stop offset="1" stop-color="#a7d6ff"/></linearGradient><linearGradient id="sg" x1="0" y1="0" x2="0" y2="1"><stop offset="0" stop-color="#ffffff"/><stop offset="0.55" stop-color="#fff6d8"/><stop offset="1" stop-color="#ffd96a"/></linearGradient></defs><rect x="1.00" y="1.00" width="24.00" height="28.00" fill="url(#cb)" stroke="#47576a" stroke-width="2"/><rect x="1.00" y="0.60" width="24.00" height="2.20" fill="#5d6f80" /><rect x="1.00" y="27.00" width="24.00" height="2.60" fill="#2f3c49" /><rect x="0.00" y="31.00" width="28.00" height="1.60" fill="#cfcfcf" /><rect x="4.00" y="4.00" width="18.00" height="8.00" fill="url(#cs)" /><rect x="6.00" y="6.00" width="14.00" height="3.60" fill="#b5defe" /><rect x="4.00" y="13.00" width="18.00" height="1.60" fill="#c5cacf" /><rect x="4.00" y="16.00" width="4.00" height="2.00" fill="#e9e9e9" /><rect x="10.00" y="16.00" width="4.00" height="2.00" fill="#e9e9e9" /><rect x="4.00" y="20.00" width="4.00" height="2.00" fill="#e9e9e9" /><rect x="10.00" y="20.00" width="4.00" height="2.00" fill="#e9e9e9" /><rect x="4.00" y="24.00" width="4.00" height="2.00" fill="#e9e9e9" /><rect x="10.00" y="24.00" width="4.00" height="2.00" fill="#e9e9e9" /><rect x="13.00" y="13.00" width="14.00" height="16.00" fill="url(#sg)" stroke="#875a12" stroke-width="2"/><path d="M15.6,15.6 H24.4 V17.6 H19 L22,21 L19,24.4 H24.4 V26.4 H15.6 V24.8 L19,21 L15.6,17.2 Z" fill="#6f4708" opacity="0.92"/></svg>
<div class="" style="position:absolute;left:1768px;top:650px;width:786px;height:6.3px;background:#676767"></div>
<div class="" style="position:absolute;left:1768px;top:656.3px;width:786px;height:37.5px;background:linear-gradient(#b7b7b7,#a0a0a0 30%,#9b9b9b 70%,#9f9f9f)"></div>
<div class="" style="position:absolute;left:1768px;top:693.8px;width:786px;height:2.4px;background:#707070"></div>
<div class="" style="position:absolute;left:1768px;top:656.3px;width:166px;height:40px;background:linear-gradient(#f0f0f0,#e6e6e6 30%,#e3e3e3);border-top:3.5px solid #86b6f0;border-right:1px solid #8a8a8a"></div>
<div style="position:absolute;left:1779.75px;top:664.31px;font-size:23.5px;line-height:23.5px;color:#000;letter-spacing:-0.732px;font-weight:400;white-space:pre;-webkit-text-stroke:0.22px #000;">Stack View</div>
<svg style="position:absolute;left:1898.8px;top:663.0999999999999px" width="26.4" height="26.4" viewBox="-13.2 -13.2 26.4 26.4"><defs><radialGradient id="cb1912" cx="50%" cy="40%" r="60%"><stop offset="0" stop-color="#b2b2b2"/><stop offset="0.8" stop-color="#a6a6a6"/><stop offset="1" stop-color="#aeaeae"/></radialGradient></defs><circle r="11.2" fill="url(#cb1912)" /><path d="M-5,-5L5,5M5,-5L-5,5" stroke="#f6f6f6" stroke-width="3.3" stroke-linecap="round"/></svg>
<div class="" style="position:absolute;left:1768px;top:696.2px;width:786px;height:49.4px;background:#e4e4e4"></div>
<div class="" style="position:absolute;left:1768px;top:745.5px;width:786px;height:2.2px;background:linear-gradient(#6e6e6e,#6e6e6e 55%,#a3a3a3)"></div>
<div class="" style="position:absolute;left:1838px;top:703.8px;width:40px;height:37.5px;background:#edf1f8"></div>
<div class="" style="position:absolute;left:1903.8px;top:702px;width:40px;height:39.5px;background:#a9a9a9"></div>
<div class="" style="position:absolute;left:1768px;top:747.7px;width:786px;height:800px;background:#d3d3d3"></div>
<div style="position:absolute;left:1778.75px;top:776.98px;font-size:27.2px;line-height:27.2px;color:#000;letter-spacing:0.689px;font-weight:400;white-space:pre;-webkit-text-stroke:0.22px #000;">Node:</div>
<div class="" style="position:absolute;left:1875.8px;top:766.3px;width:690px;height:38px;background:#fff;border-radius:7px;box-shadow:0 0 0 1px #c6c6c6,0 1px 1px rgba(0,0,0,0.15)"></div>
<div style="position:absolute;left:1893px;top:770.78px;font-size:27.2px;line-height:27.2px;color:#000;letter-spacing:2.48px;font-weight:700;white-space:pre;-webkit-text-stroke:0.22px #000;">455</div>
<div style="position:absolute;left:1946.6px;top:770.78px;font-size:27.2px;line-height:27.2px;color:#000;letter-spacing:0.913px;font-weight:400;white-space:pre;-webkit-text-stroke:0.22px #000;">: If</div>
<div class="" style="position:absolute;left:1940.2px;top:829.8px;width:620px;height:50.3px;background:#ededed;border:2px solid #a9c6ea;border-right:none;box-shadow:inset 0 0 0 1px #dde6f1"></div>
<div style="position:absolute;left:1992.5px;top:838.28px;font-size:27.2px;line-height:27.2px;color:#ababab;letter-spacing:-0.509px;font-weight:400;white-space:pre;-webkit-text-stroke:0.22px #ababab;">JSReadCurrentFrameSlotNodeGen</div>
<div style="position:absolute;left:2409px;top:838.28px;font-size:27.2px;line-height:27.2px;color:#ababab;letter-spacing:0.329px;font-weight:700;white-space:pre;-webkit-text-stroke:0.22px #ababab;">.execute</div>
<div style="position:absolute;left:2524.5px;top:838.28px;font-size:27.2px;line-height:27.2px;color:#ababab;letter-spacing:-0.554px;font-weight:400;white-space:pre;-webkit-text-stroke:0.22px #ababab;">():4</div>
<div class="" style="position:absolute;left:1793.7px;top:837px;width:55px;height:41.2px;background:#fff;border-radius:9px;box-shadow:0 0 0 1px #cfcfcf,0 1px 2px rgba(0,0,0,0.2)"></div>
<svg class="abs" style="left:1824px;top:850px" width="20" height="14" viewBox="1824 850 20 14"><polygon points="1826.2,854.6 1840,854.6 1833.1,861.4" fill="#555"/></svg>
<div class="" style="position:absolute;left:1865.5px;top:885.5px;width:418.8px;height:92.5px;background:#fff;box-shadow:0 11px 26px 7px rgba(0,0,0,0.15),0 1px 5px rgba(0,0,0,0.22)"></div>
<div class="" style="position:absolute;left:1843.8px;top:868px;width:457px;height:125.8px;border:5.8px solid #2e0b41;background:transparent"></div>
<div style="position:absolute;left:1945.5px;top:899.00px;font-size:29.3px;line-height:29.3px;color:#000;letter-spacing:-0.077px;font-weight:400;white-space:pre;-webkit-text-stroke:0.22px #000;">Locate in Java Project</div>
<div style="position:absolute;left:1948.75px;top:936.70px;font-size:29.3px;line-height:29.3px;color:#000;letter-spacing:0.922px;font-weight:400;white-space:pre;-webkit-text-stroke:0.22px #000;">Add root of sources</div>
<svg class="abs" style="left:1890px;top:750px" width="250" height="110" viewBox="1890 750 250 110"><path d="M2118.5,765.2L1928,839" stroke="#2e0b41" stroke-width="5.6" stroke-linecap="butt"/><polygon points="1907.5,843.8 1930.5,820.5 1940.3,846.8" fill="#2e0b41"/></svg>
<svg class="abs" style="left:2320px;top:55px" width="234" height="46" viewBox="2320 55 234 46"><defs><linearGradient id="gCy" x1="0" y1="0" x2="1" y2="0"><stop offset="0" stop-color="#ffffff"/><stop offset="0.55" stop-color="#d9d9d9"/><stop offset="1" stop-color="#f6f6f6"/></linearGradient><linearGradient id="gWn" x1="0" y1="0" x2="0" y2="1"><stop offset="0" stop-color="#ffffff"/><stop offset="1" stop-color="#9fcdf1"/></linearGradient><linearGradient id="gPl" x1="0" y1="0" x2="0" y2="1"><stop offset="0" stop-color="#d0f7a8"/><stop offset="1" stop-color="#66cc22"/></linearGradient></defs>
<path d="M2327.3,67 V85 A11,4.6 0 0 0 2349,85 V67 Z" fill="url(#gCy)" stroke="#b4b4b4" stroke-width="1.6"/>
<ellipse cx="2338.2" cy="67" rx="10.9" ry="4.4" fill="#fdfdfd" stroke="#b4b4b4" stroke-width="1.6"/>
<circle cx="2347.00" cy="85.20" r="6.60" fill="#62b238" stroke="#2c7a12" stroke-width="2.2"/>
<rect x="2343.00" y="84.20" width="8.00" height="2.10" fill="#fff" /><rect x="2345.95" y="81.20" width="2.10" height="8.00" fill="#fff" />
<path d="M2384.7,66 V85 A11.4,5 0 0 0 2407.5,85 V66 A11.4,4.6 0 0 0 2384.7,66 Z" fill="#a5a5a5" stroke="#a0a0a0" stroke-width="1"/>
<circle cx="2405.40" cy="85.20" r="7.40" fill="#9d9d9d" stroke="#9a9a9a" stroke-width="1"/>
<rect x="2401.20" y="84.10" width="8.40" height="2.20" fill="#b3b3b3" />
<rect x="2465.00" y="63.30" width="22.00" height="21.60" fill="url(#gWn)" stroke="#3b5a7d" stroke-width="2"/>
<rect x="2464.00" y="86.20" width="24.00" height="1.60" fill="#bdbdbd" />
<polygon points="2481.20,75.00 2486.80,75.00 2486.80,79.00 2490.90,79.00 2490.90,84.60 2486.80,84.60 2486.80,88.60 2481.20,88.60 2481.20,84.60 2477.20,84.60 2477.20,79.00 2481.20,79.00" fill="url(#gPl)" stroke="#16690a" stroke-width="2" stroke-linejoin="miter" />
<rect x="2523.00" y="63.30" width="22.00" height="21.60" fill="url(#gWn)" stroke="#3b5a7d" stroke-width="2"/>
<rect x="2522.00" y="86.20" width="24.00" height="1.60" fill="#bdbdbd" />
<circle cx="2541.00" cy="80.80" r="7.40" fill="#f7d0d2" stroke="#cf1322" stroke-width="3"/>
<line x1="2536.50" y1="76.30" x2="2545.50" y2="85.30" stroke="#cf1322" stroke-width="3" stroke-linecap="butt"/>
</svg>
<svg class="abs" style="left:1776px;top:698px" width="240" height="48" viewBox="1776 698 240 48"><defs><linearGradient id="gFs" x1="0" y1="0" x2="0" y2="1"><stop offset="0" stop-color="#bdbdbd"/><stop offset="1" stop-color="#7c7f82"/></linearGradient><linearGradient id="gUp" x1="0" y1="0" x2="0" y2="1"><stop offset="0" stop-color="#ffe6c2"/><stop offset="1" stop-color="#f9b56a"/></linearGradient><linearGradient id="gGa" x1="0" y1="0" x2="0" y2="1"><stop offset="0" stop-color="#dff2d2"/><stop offset="1" stop-color="#9fd482"/></linearGradient></defs>
<rect x="1790.70" y="708.70" width="20.60" height="24.60" fill="#a4a4a4" stroke="#999999" stroke-width="1.4"/><polygon points="1780.70,716.70 1788.80,716.70 1788.80,712.80 1797.30,721.00 1788.80,729.20 1788.80,725.30 1780.70,725.30" fill="#a9a9a9" stroke="#9c9c9c" stroke-width="1.4" stroke-linejoin="miter" />
<rect x="1845.00" y="711.00" width="28.00" height="26.00" fill="url(#gFs)" stroke="#585b5e" stroke-width="2" rx="2"/>
<rect x="1846.00" y="711.20" width="26.00" height="4.40" fill="#5f6265" /><rect x="1846.00" y="733.00" width="26.00" height="4.40" fill="#5f6265" />
<rect x="1848.20" y="712.30" width="2.20" height="2.20" fill="#fff" /><rect x="1848.20" y="734.10" width="2.20" height="2.20" fill="#fff" />
<rect x="1852.20" y="712.30" width="2.20" height="2.20" fill="#fff" /><rect x="1852.20" y="734.10" width="2.20" height="2.20" fill="#fff" />
<rect x="1856.20" y="712.30" width="2.20" height="2.20" fill="#fff" /><rect x="1856.20" y="734.10" width="2.20" height="2.20" fill="#fff" />
<rect x="1860.20" y="712.30" width="2.20" height="2.20" fill="#fff" /><rect x="1860.20" y="734.10" width="2.20" height="2.20" fill="#fff" />
<rect x="1864.20" y="712.30" width="2.20" height="2.20" fill="#fff" /><rect x="1864.20" y="734.10" width="2.20" height="2.20" fill="#fff" />
<rect x="1868.20" y="712.30" width="2.20" height="2.20" fill="#fff" /><rect x="1868.20" y="734.10" width="2.20" height="2.20" fill="#fff" />
<rect x="1845.00" y="739.00" width="28.00" height="1.60" fill="#cfd2d6" />
<polygon points="1858.80,709.20 1867.00,718.80 1863.00,718.80 1863.00,727.00 1854.80,727.00 1854.80,718.80 1850.60,718.80" fill="url(#gUp)" stroke="#a84e02" stroke-width="1.9" stroke-linejoin="miter" />
<rect x="1911.00" y="711.00" width="28.00" height="26.00" fill="#a0a0a0" stroke="#979797" stroke-width="2" rx="2"/>
<rect x="1914.20" y="712.30" width="2.20" height="2.20" fill="#acacac" /><rect x="1914.20" y="734.10" width="2.20" height="2.20" fill="#acacac" />
<rect x="1918.20" y="712.30" width="2.20" height="2.20" fill="#acacac" /><rect x="1918.20" y="734.10" width="2.20" height="2.20" fill="#acacac" />
<rect x="1922.20" y="712.30" width="2.20" height="2.20" fill="#acacac" /><rect x="1922.20" y="734.10" width="2.20" height="2.20" fill="#acacac" />
<rect x="1926.20" y="712.30" width="2.20" height="2.20" fill="#acacac" /><rect x="1926.20" y="734.10" width="2.20" height="2.20" fill="#acacac" />
<rect x="1930.20" y="712.30" width="2.20" height="2.20" fill="#acacac" /><rect x="1930.20" y="734.10" width="2.20" height="2.20" fill="#acacac" />
<rect x="1934.20" y="712.30" width="2.20" height="2.20" fill="#acacac" /><rect x="1934.20" y="734.10" width="2.20" height="2.20" fill="#acacac" />
<polygon points="1924.80,727.60 1934.00,717.40 1929.20,717.40 1929.20,709.20 1920.40,709.20 1920.40,717.40 1915.60,717.40" fill="#a3a3a3" stroke="#989898" stroke-width="1.6" stroke-linejoin="miter" />
<line x1="1981.00" y1="713.00" x2="1987.00" y2="721.00" stroke="#000" stroke-width="2.4" stroke-linecap="butt"/><line x1="1996.00" y1="713.00" x2="1990.50" y2="721.00" stroke="#000" stroke-width="2.4" stroke-linecap="butt"/><line x1="1986.50" y1="725.00" x2="1980.00" y2="731.00" stroke="#000" stroke-width="2.4" stroke-linecap="butt"/><line x1="1990.50" y1="725.00" x2="1995.00" y2="731.00" stroke="#000" stroke-width="2.4" stroke-linecap="butt"/>
<rect x="1974.00" y="708.20" width="10.00" height="6.00" fill="#000" shape-rendering="crispEdges"/><rect x="1976.00" y="710.20" width="6.00" height="2.00" fill="#ffe01a" shape-rendering="crispEdges"/><rect x="1990.20" y="708.20" width="10.00" height="6.00" fill="#000" shape-rendering="crispEdges"/><rect x="1992.20" y="710.20" width="6.00" height="2.00" fill="#ffe01a" shape-rendering="crispEdges"/><rect x="1983.00" y="720.40" width="11.00" height="6.00" fill="#000" /><rect x="1985.00" y="722.40" width="7.00" height="2.00" fill="#ffe01a" /><rect x="1974.00" y="730.00" width="10.00" height="6.00" fill="#000" shape-rendering="crispEdges"/><rect x="1976.00" y="732.00" width="6.00" height="2.00" fill="#ffe01a" shape-rendering="crispEdges"/><rect x="1990.20" y="730.00" width="10.00" height="6.00" fill="#000" shape-rendering="crispEdges"/><rect x="1992.20" y="732.00" width="6.00" height="2.00" fill="#ffe01a" shape-rendering="crispEdges"/>
<polygon points="1971.20,713.00 1978.60,713.00 1978.60,709.00 1980.00,709.00 1988.60,717.00 1980.00,725.20 1978.60,725.20 1978.60,721.00 1971.20,721.00" fill="url(#gGa)" stroke="#3c7d12" stroke-width="2" stroke-linejoin="miter" />
</svg>
<svg class="abs" style="left:354px;top:10px" width="32" height="36" viewBox="354 10 32 36"><defs><linearGradient id="gJs" x1="0" y1="0" x2="0" y2="1"><stop offset="0" stop-color="#c3d9ec"/><stop offset="1" stop-color="#ffffff"/></linearGradient></defs><path d="M357,13.2 H374 L381,20.2 V41 H357 Z" fill="url(#gJs)" stroke="#5f7d95" stroke-width="2"/><path d="M374,13.2 V20.2 H381 Z" fill="#e8f0f8" stroke="#5f7d95" stroke-width="1.6"/><rect x="356.00" y="42.40" width="26.00" height="1.60" fill="#9a9a9a" /><rect x="360.00" y="24.00" width="18.00" height="14.00" fill="#a33a30" /><path d="M363.5,34 v1.6 h3.2 v-9.2 h-2.2 M369.6,26.6 h6 M375.6,26.4 h-5.6 v4 h5.4 v5 h-5.8" fill="none" stroke="#fff2f0" stroke-width="2"/></svg>
<svg class="abs" style="left:1788px;top:832px" width="200" height="50" viewBox="1788 832 200 50"><defs><linearGradient id="gFi" x1="0" y1="0" x2="0" y2="1"><stop offset="0" stop-color="#b3cce3"/><stop offset="1" stop-color="#ffffff"/></linearGradient><radialGradient id="gGe" cx="50%" cy="50%" r="50%"><stop offset="0.4" stop-color="#e8f4e2"/><stop offset="1" stop-color="#bfe3b5"/></radialGradient></defs>
<path d="M1791.3,843 H1808 L1815,850 V870.6 H1791.3 Z" fill="url(#gFi)" stroke="#6a8299" stroke-width="2"/>
<path d="M1808,843 V850 H1815 Z" fill="#eef3f8" stroke="#6a8299" stroke-width="1.4"/>
<rect x="1790.50" y="872.00" width="25.00" height="1.50" fill="#b9b9b9" />
<rect x="1795.20" y="857.20" width="10.00" height="7.40" fill="#a9d2f2" stroke="#386996" stroke-width="2"/>
<polygon points="1803.00,849.60 1807.60,854.20 1803.00,858.80 1798.40,854.20" fill="#f0b050" stroke="#b86a10" stroke-width="1.5" stroke-linejoin="miter" />
<circle cx="1807.60" cy="861.00" r="3.90" fill="#f29a9a" stroke="#c65252" stroke-width="1.5"/>
<clipPath id="mgc"><rect x="1870" y="832" width="60" height="36"/></clipPath><g clip-path="url(#mgc)">
<line x1="1898.00" y1="862.40" x2="1907.00" y2="871.40" stroke="#111" stroke-width="4" stroke-linecap="butt"/>
<circle cx="1892.00" cy="855.70" r="8.70" fill="#d3e6f9" stroke="#4a4c50" stroke-width="2.2"/>
<circle cx="1890.50" cy="853.50" r="4.20" fill="#f2f8fe"/>
</g>
<polygon points="1975.66,850.00 1975.66,852.20 1973.48,853.46 1972.99,855.30 1974.25,857.48 1973.14,859.38 1970.63,859.38 1969.28,860.73 1969.28,863.24 1967.38,864.35 1965.20,863.09 1963.36,863.58 1962.10,865.76 1959.90,865.76 1958.64,863.58 1956.80,863.09 1954.62,864.35 1952.72,863.24 1952.72,860.73 1951.37,859.38 1948.86,859.38 1947.75,857.48 1949.01,855.30 1948.52,853.46 1946.34,852.20 1946.34,850.00 1948.52,848.74 1949.01,846.90 1947.75,844.72 1948.86,842.82 1951.37,842.82 1952.72,841.47 1952.72,838.96 1954.62,837.85 1956.80,839.11 1958.64,838.62 1959.90,836.44 1962.10,836.44 1963.36,838.62 1965.20,839.11 1967.38,837.85 1969.28,838.96 1969.28,841.47 1970.63,842.82 1973.14,842.82 1974.25,844.72 1972.99,846.90 1973.48,848.74" fill="url(#gGe)" stroke="#2f7d2f" stroke-width="1.7" stroke-linejoin="miter" />
<circle cx="1961.00" cy="851.10" r="6.20" fill="#fbfdfb" stroke="#2a7a2a" stroke-width="2"/>
<circle cx="1961.00" cy="851.10" r="9.60" fill="none" stroke="#8cc684" stroke-width="1.2"/>
</svg>
<svg class="abs" style="left:1904px;top:892px" width="40" height="76" viewBox="1904 892 40 76"><defs><linearGradient id="gCu" x1="0" y1="0" x2="1" y2="1"><stop offset="0" stop-color="#fde0d2"/><stop offset="1" stop-color="#ee8a62"/></linearGradient></defs>
<rect x="1914.50" y="896.00" width="2.00" height="11.00" fill="#8e9a9c" /><rect x="1918.60" y="896.00" width="2.00" height="11.00" fill="#8e9a9c" /><rect x="1923.00" y="896.00" width="2.00" height="9.00" fill="#c9d2d4" /><rect x="1916.50" y="900.00" width="2.00" height="6.00" fill="#dfe5e6" /><rect x="1920.60" y="900.00" width="2.00" height="6.00" fill="#dfe5e6" />
<ellipse cx="1921" cy="921.4" rx="12.6" ry="5" fill="url(#gCu)" stroke="#a4553a" stroke-width="1.6"/>
<path d="M1930,907.5 q8.6,-1.2 8,5 q-0.6,5 -9.5,6" fill="none" stroke="#c4704e" stroke-width="3"/>
<path d="M1910.6,906 H1930.4 Q1930.4,919 1920.5,921 Q1910.6,919 1910.6,906 Z" fill="url(#gCu)" stroke="#a4553a" stroke-width="1.8"/>
<ellipse cx="1920.5" cy="906.6" rx="9.4" ry="2.6" fill="#9a4a32"/>
<rect x="1909.00" y="927.00" width="22.00" height="1.40" fill="#d5dadc" />
<path d="M1927,941 H1937 V961 H1918" fill="#a0a0ff" stroke="#000" stroke-width="2.2"/>
<path d="M1916,943.6 H1927 V947 H1916 Z" fill="#a0a0ff" stroke="#000" stroke-width="2"/>
<path d="M1911,947.4 H1931.6 L1935,961 H1917 Z" fill="#bcbcff" stroke="#000" stroke-width="2.2"/>
<path d="M1912.6,949 H1930 L1930.8,952 H1914 Z" fill="#fff"/>
<path d="M1914,952 L1917.6,960 L1914.5,952.5 Z" fill="#fff" stroke="#fff" stroke-width="2"/>
</svg>
<div class="" style="position:absolute;left:2554px;top:0px;width:4px;height:1546px;background:#676767"></div>
<div class="" style="position:absolute;left:2554px;top:0px;width:4px;height:4px;background:#3a3a3a"></div>
</div></body></html>
